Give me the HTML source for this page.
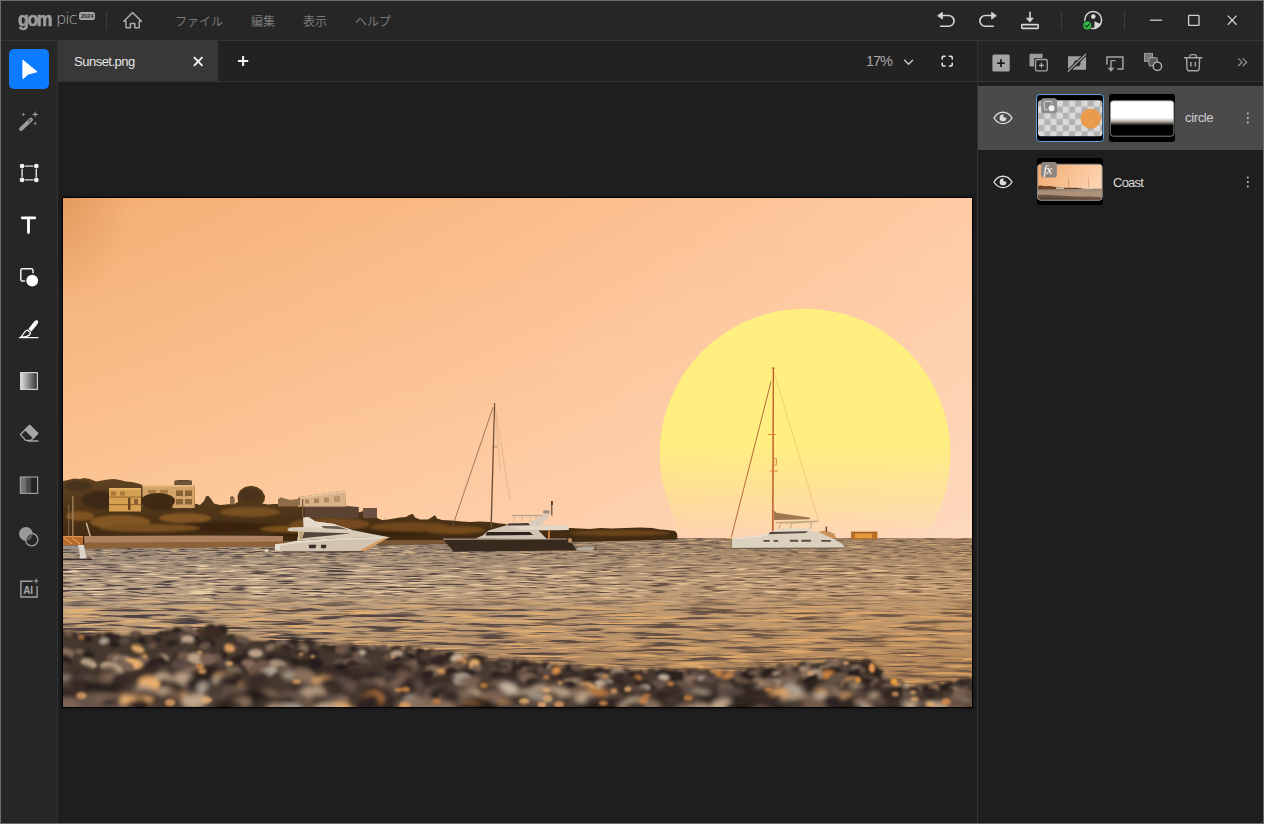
<!DOCTYPE html>
<html lang="ja">
<head>
<meta charset="utf-8">
<title>GOM Pic</title>
<style>
*{box-sizing:border-box;margin:0;padding:0}
html,body{width:1264px;height:824px;overflow:hidden;background:#1e1e1e}
body{font-family:"Liberation Sans","Noto Sans CJK JP",sans-serif;color:#ccc;position:relative}
.abs{position:absolute}
#win{position:absolute;left:0;top:0;width:1264px;height:824px;border:1px solid #6c6c6c;pointer-events:none;z-index:50}
#title{position:absolute;left:0;top:0;width:1264px;height:40px;background:#262626}
#titleline{position:absolute;left:0;top:40px;width:1264px;height:1px;background:#363636}
#tools{position:absolute;left:0;top:41px;width:57px;height:783px;background:#262626}
#toolsline{position:absolute;left:57px;top:41px;width:1px;height:783px;background:#333}
#tabbar{position:absolute;left:58px;top:41px;width:919px;height:40px;background:#222}
#tabline{position:absolute;left:58px;top:81px;width:1206px;height:1px;background:#343434}
#tab{position:absolute;left:58px;top:41px;width:160px;height:40px;background:#383838}
#tab span{position:absolute;left:16px;top:12.5px;font-size:13px;color:#e6e6e6;letter-spacing:-0.5px}
#canvas{position:absolute;left:58px;top:82px;width:919px;height:742px;background:#1e1e1e}
#panelline{position:absolute;left:977px;top:41px;width:1px;height:783px;background:#333}
#panel{position:absolute;left:978px;top:41px;width:286px;height:783px;background:#1e1e1e}
#ptools{position:absolute;left:978px;top:41px;width:286px;height:40px;background:#242424}
.menu{position:absolute;top:14px;font-size:12px;color:#7a7a7a;white-space:nowrap;line-height:16px}
.row{position:absolute;left:978px;width:285px;height:64px}
.lname{position:absolute;font-size:13px;color:#cfcfcf;line-height:16px}
svg{position:absolute;overflow:visible}
</style>
</head>
<body>
<div id="title"></div>
<div id="titleline"></div>
<div id="tools"></div>
<div id="toolsline"></div>
<div id="tabbar"></div>
<div id="tab"><span>Sunset.png</span></div>
<div id="canvas"></div>
<div id="panel"></div>
<div id="ptools"></div>
<div id="tabline"></div>
<div id="panelline"></div>

<!-- TITLEBAR -->
<div class="abs" id="logo" style="left:18px;top:7px;height:26px;white-space:nowrap;line-height:26px">
<span id="gom" style="font-weight:bold;font-size:20px;color:#9c9c9c;-webkit-text-stroke:0.7px #9c9c9c;letter-spacing:-1.6px;display:inline-block;position:relative;top:-1.5px;transform-origin:0 50%;transform:scaleX(.885)">gom</span><span id="pic" style="font-family:'DejaVu Sans Light','DejaVu Sans','Liberation Sans',sans-serif;font-weight:200;font-size:16.5px;color:#b4b4b4;letter-spacing:-1.1px;position:absolute;left:38px;top:-1px">pic</span>
</div>
<div class="abs" style="left:79px;top:12px;width:16px;height:8px;border-radius:2.5px;background:#a4a4a4;color:#2a2a2a;font-size:6px;font-weight:bold;line-height:8px;text-align:center;letter-spacing:-0.2px">2024</div>
<div class="abs" style="left:106px;top:11px;width:1px;height:19px;background:#3c3c3c"></div>
<svg style="left:120px;top:8px" width="26" height="24" viewBox="120 8 26 24" fill="none" stroke="#a8a8a8" stroke-width="1.5" stroke-linejoin="round" stroke-linecap="round">
<path d="M123.8,21.2 L132.6,12.6 141.4,21.2 H139.2 V27.8 H134.8 V23.4 H130.4 V27.8 H126 V21.2Z"/>
</svg>
<div class="menu" style="left:175px">ファイル</div>
<div class="menu" style="left:251px">編集</div>
<div class="menu" style="left:303px">表示</div>
<div class="menu" style="left:355px">ヘルプ</div>
<svg style="left:930px;top:5px" width="120" height="30" viewBox="930 5 120 30" fill="none" stroke="#d4d4d4" stroke-width="1.6" stroke-linecap="round" stroke-linejoin="round">
<path d="M941,15.5 H948.6 A5.4,5.4 0 0 1 948.6,26.3 H940.6"/><path d="M938,15.5 L942.3,12.4 V18.6Z" fill="#d4d4d4" stroke-width="1"/>
<path d="M993,15.5 H985.3 A5.4,5.4 0 0 0 985.3,26.3 H993.3"/><path d="M996,15.5 L991.7,12.4 V18.6Z" fill="#d4d4d4" stroke-width="1"/>
<path d="M1030,12.4 V19"/><path d="M1026.8,18.2 H1033.2 L1030,21.8Z" fill="#d4d4d4" stroke-width="1"/>
<rect x="1021.8" y="24.6" width="16.4" height="3.8" rx="0.6"/>
</svg>
<div class="abs" style="left:1061px;top:11px;width:1px;height:19px;background:#3c3c3c"></div>
<svg style="left:1078px;top:8px" width="28" height="26" viewBox="1078 8 28 26">
<circle cx="1093.2" cy="20" r="8.4" fill="none" stroke="#d8d8d8" stroke-width="1.5"/>
<circle cx="1093.3" cy="16.6" r="2.3" fill="#d8d8d8"/>
<path d="M1094.5,21.2 L1101,24.2 A8.4,8.4 0 0 1 1094.5,28.3Z" fill="#d8d8d8"/>
<circle cx="1087.2" cy="25.4" r="4.9" fill="#262626"/>
<circle cx="1087.2" cy="25.4" r="4" fill="#2fbf4a"/>
<path d="M1085.2,25.4 L1086.7,27 1089.3,24" fill="none" stroke="#143a1c" stroke-width="1.2" stroke-linecap="round" stroke-linejoin="round"/>
</svg>
<div class="abs" style="left:1124px;top:11px;width:1px;height:19px;background:#3c3c3c"></div>
<svg style="left:1145px;top:10px" width="100" height="22" viewBox="1145 10 100 22" fill="none" stroke="#cfcfcf" stroke-width="1.3">
<path d="M1150,20.2 H1162"/>
<rect x="1188.6" y="15.4" width="10.4" height="10" rx="0.5"/>
<path d="M1227.8,15.6 L1236.6,24.8 M1236.6,15.6 L1227.8,24.8"/>
</svg>

<!-- TOOLS -->
<div class="abs" style="left:9px;top:49px;width:40px;height:40px;border-radius:5px;background:#0b7bff"></div>
<svg style="left:9px;top:49px" width="40" height="40" viewBox="9 49 40 40"><path d="M22.9,60.2 L37,71.8 28.4,74 22.9,78.7Z" fill="#fff" stroke="#fff" stroke-width="1" stroke-linejoin="round"/></svg>
<svg style="left:14px;top:105px" width="30" height="30" viewBox="14 105 30 30">
<path d="M21,129 L31,119.6" stroke="#9a9a9a" stroke-width="4" stroke-linecap="round"/>
<path d="M28.6,121.6 L30.6,119.8" stroke="#262626" stroke-width="1" stroke-linecap="round"/>
<path d="M35.2,111 L36,113.6 38.6,114.4 36,115.2 35.2,117.8 34.4,115.2 31.8,114.4 34.4,113.6Z M23.4,112.2 L23.9,113.9 25.6,114.4 23.9,114.9 23.4,116.6 22.9,114.9 21.2,114.4 22.9,113.9Z M35.2,121.4 L35.7,123.1 37.4,123.6 35.7,124.1 35.2,125.8 34.7,124.1 33,123.6 34.7,123.1Z" fill="#9a9a9a"/>
</svg>
<svg style="left:14px;top:158px" width="30" height="30" viewBox="14 158 30 30">
<path d="M25,166.1 H33.4 M25,179.9 H33.4 M22.1,169 V177 M36.3,169 V177" stroke="#e4e4e4" stroke-width="1.4" fill="none"/>
<circle cx="22.1" cy="166.1" r="2.4" fill="#f0f0f0"/><circle cx="36.3" cy="166.1" r="2.4" fill="#f0f0f0"/><circle cx="22.1" cy="179.9" r="2.4" fill="#f0f0f0"/><circle cx="36.3" cy="179.9" r="2.4" fill="#f0f0f0"/>
</svg>
<svg style="left:14px;top:210px" width="30" height="30" viewBox="14 210 30 30"><path d="M22.2,217.8 H34.8 M28.5,217.8 V232.6" stroke="#fff" stroke-width="2.8" stroke-linecap="round" fill="none"/></svg>
<svg style="left:14px;top:262px" width="30" height="30" viewBox="14 262 30 30">
<path d="M24.5,281 H22.4 A1.6,1.6 0 0 1 20.8,279.4 V270.4 A1.6,1.6 0 0 1 22.4,268.8 H31.4 A1.6,1.6 0 0 1 33,270.4 V272.8" stroke="#f0f0f0" stroke-width="1.5" fill="none" stroke-linecap="round"/>
<circle cx="32.2" cy="280.6" r="5.9" fill="#fff"/>
</svg>
<svg style="left:14px;top:314px" width="30" height="30" viewBox="14 314 30 30">
<path d="M19.4,337.6 H38" stroke="#f4f4f4" stroke-width="1.3" stroke-linecap="round"/>
<path d="M37.6,320.6 C38.8,321.6 38.2,323.4 36.6,325.2 L31.4,331.4 28.4,329 33.4,322.6 C34.8,320.8 36.4,319.8 37.6,320.6Z" fill="#fff"/>
<path d="M27.4,330 L30.4,332.4 C30.4,335.6 26,337.4 20.6,337.2 C23.2,335.6 23.4,331.4 27.4,330Z" fill="none" stroke="#fff" stroke-width="1.3" stroke-linejoin="round"/>
</svg>
<svg style="left:14px;top:366px" width="30" height="30" viewBox="14 366 30 30"><defs><linearGradient id="tg1" x1="0" x2="1"><stop offset="0" stop-color="#e2e2e2"/><stop offset="1" stop-color="#2e2e2e"/></linearGradient></defs>
<rect x="20.6" y="372.6" width="16.8" height="16.8" fill="url(#tg1)" stroke="#d0d0d0" stroke-width="1.2"/></svg>
<svg style="left:14px;top:418px" width="30" height="30" viewBox="14 418 30 30">
<path d="M20.4,434.4 L29.6,425.6 37.6,433.2 31,440.4 H25.6Z" fill="none" stroke="#a6a6a6" stroke-width="1.4" stroke-linejoin="round"/>
<path d="M25.2,429.8 L29.6,425.6 37.6,433.2 33.4,437.8Z" fill="#a6a6a6" stroke="#a6a6a6" stroke-width="1.4" stroke-linejoin="round"/>
<path d="M28,441 H38" stroke="#a6a6a6" stroke-width="1.3" stroke-linecap="round"/>
</svg>
<svg style="left:14px;top:470px" width="30" height="30" viewBox="14 470 30 30"><defs><linearGradient id="tg2" x1="0" x2="1"><stop offset="0" stop-color="#7c7c7c"/><stop offset=".34" stop-color="#6a6a6a"/><stop offset=".36" stop-color="#4c4c4c"/><stop offset=".62" stop-color="#444"/><stop offset=".64" stop-color="#262626"/><stop offset="1" stop-color="#222"/></linearGradient></defs>
<rect x="20.4" y="477" width="17.2" height="16.4" fill="url(#tg2)" stroke="#9c9c9c" stroke-width="1.2"/></svg>
<svg style="left:14px;top:522px" width="30" height="30" viewBox="14 522 30 30">
<defs><clipPath id="bc2"><circle cx="31.7" cy="539.6" r="6.2"/></clipPath></defs>
<circle cx="25.9" cy="533.8" r="6.9" fill="#9a9a9a"/>
<circle cx="31.7" cy="539.6" r="6.2" fill="#262626"/>
<circle cx="25.9" cy="533.8" r="6.9" fill="#5c5c5c" clip-path="url(#bc2)"/>
<circle cx="31.7" cy="539.6" r="6.2" fill="none" stroke="#a0a0a0" stroke-width="1.3"/>
</svg>
<svg style="left:14px;top:574px" width="30" height="30" viewBox="14 574 30 30">
<path d="M32.6,581.2 H20.9 V597 H37.1 V586" fill="none" stroke="#a0a0a0" stroke-width="1.4"/>
<path d="M36.1,577.6 L36.8,580.2 39.4,580.9 36.8,581.6 36.1,584.2 35.4,581.6 32.8,580.9 35.4,580.2Z" fill="#a0a0a0"/>
<text x="23.2" y="594" font-family="Liberation Sans, sans-serif" font-weight="bold" font-size="10" fill="#a8a8a8" letter-spacing="-0.2">AI</text>
</svg>

<!-- TAB BAR -->
<svg style="left:190px;top:53px" width="60" height="16" viewBox="190 53 60 16" fill="none" stroke="#f2f2f2" stroke-width="1.7" stroke-linecap="round">
<path d="M193.9,57.2 L202.5,65.8 M202.5,57.2 L193.9,65.8" stroke-linecap="butt" stroke-width="1.9"/>
<path d="M238,61 H248.2 M243.1,55.9 V66.1" stroke-width="2" stroke-linecap="butt"/>
</svg>
<div class="abs" style="left:866px;top:52px;font-size:14.5px;color:#a8a8a8;line-height:18px;letter-spacing:-1.1px">17%</div>
<svg style="left:900px;top:52px" width="60" height="18" viewBox="900 52 60 18" fill="none" stroke-linecap="round" stroke-linejoin="round">
<path d="M904.6,60.2 L908.6,64.2 912.6,60.2" stroke="#c8c8c8" stroke-width="1.4"/>
<path d="M942.2,59 V57.4 A1.2,1.2 0 0 1 943.4,56.2 H945 M949.4,56.2 H951 A1.2,1.2 0 0 1 952.2,57.4 V59 M952.2,63.2 V64.8 A1.2,1.2 0 0 1 951,66 H949.4 M945,66 H943.4 A1.2,1.2 0 0 1 942.2,64.8 V63.2" stroke="#ececec" stroke-width="1.5"/>
</svg>

<!-- PANEL TOOLBAR -->
<svg style="left:985px;top:48px" width="270" height="30" viewBox="985 48 270 30" fill="none">
<rect x="992.4" y="54.5" width="17.3" height="17" rx="1.6" fill="#a4a4a4"/>
<path d="M997.2,63.1 H1004.8 M1001,59.3 V66.9" stroke="#1c1c1c" stroke-width="1.8"/>
<rect x="1029.5" y="53.7" width="13.1" height="12.7" rx="1" fill="#9c9c9c"/>
<rect x="1034" y="58" width="14.6" height="14.2" rx="1.6" fill="#242424"/>
<rect x="1035.5" y="59.5" width="11.8" height="11.4" rx="1.4" fill="#242424" stroke="#a4a4a4" stroke-width="1.3"/>
<path d="M1038.9,65.3 H1043.9 M1041.4,62.8 V67.8" stroke="#b0b0b0" stroke-width="1.2"/>
<rect x="1068" y="56.3" width="18" height="13.4" rx=".8" fill="#a0a0a0"/>
<ellipse cx="1077.2" cy="63.3" rx="3.3" ry="3.1" fill="#2a2a2a"/>
<path d="M1067.6,72 L1086.2,53.8" stroke="#242424" stroke-width="3.6"/>
<path d="M1067.8,71.6 L1086,54" stroke="#a8a8a8" stroke-width="1.2"/>
<path d="M1107,64.6 V57 H1122.9 V69 H1117.3" stroke="#a4a4a4" stroke-width="1.5"/>
<path d="M1115.6,60.6 H1111 V68.6" stroke="#a4a4a4" stroke-width="1.4"/>
<path d="M1107.6,67.8 H1114.4 L1111,71.8Z" fill="#a4a4a4"/>
<rect x="1144.5" y="53.4" width="8" height="8" fill="#767676" stroke="#9a9a9a" stroke-width="1"/>
<rect x="1148.9" y="57.6" width="8.4" height="8.4" rx="2" fill="#585858" stroke="#9a9a9a" stroke-width="1.1"/>
<circle cx="1157.4" cy="66.3" r="4.2" fill="#242424" stroke="#b0b0b0" stroke-width="1.4"/>
<path d="M1184.4,57.8 H1201.8 M1189.8,57.6 V56.4 A1.8,1.8 0 0 1 1191.6,54.6 H1194.6 A1.8,1.8 0 0 1 1196.4,56.4 V57.6 M1186.6,58 L1187,68.6 A2.2,2.2 0 0 0 1189.2,70.8 H1197 A2.2,2.2 0 0 0 1199.2,68.6 L1199.6,58" stroke="#a4a4a4" stroke-width="1.4" stroke-linecap="round"/>
<path d="M1190.9,62 V66.4 M1195.3,62 V66.4" stroke="#a4a4a4" stroke-width="1.5"/>
<path d="M1238.3,58.4 L1242.1,62.2 1238.3,66 M1242.8,58.4 L1246.6,62.2 1242.8,66" stroke="#9a9a9a" stroke-width="1.1"/>
</svg>

<!-- LAYER ROWS -->
<div class="row" style="top:86px;background:#4a4a4a"></div>
<svg style="left:990px;top:108px" width="26" height="20" viewBox="990 108 26 20" fill="none">
<path d="M994,118 C996.6,113.6 1000,112.2 1003,112.2 C1006,112.2 1009.4,113.6 1012,118 C1009.4,122.2 1006,123.6 1003,123.6 C1000,123.6 996.6,122.2 994,118Z" stroke="#dcdcdc" stroke-width="1.4"/>
<circle cx="1003" cy="117.9" r="3.4" fill="#dcdcdc"/><circle cx="1005" cy="116" r="1.7" fill="#4a4a4a"/>
</svg>
<svg style="left:990px;top:172px" width="26" height="20" viewBox="990 172 26 20" fill="none">
<path d="M994,182 C996.6,177.6 1000,176.2 1003,176.2 C1006,176.2 1009.4,177.6 1012,182 C1009.4,186.2 1006,187.6 1003,187.6 C1000,187.6 996.6,186.2 994,182Z" stroke="#dcdcdc" stroke-width="1.4"/>
<circle cx="1003" cy="181.9" r="3.4" fill="#dcdcdc"/><circle cx="1005" cy="180" r="1.7" fill="#1e1e1e"/>
</svg>
<!-- thumb 1 -->
<div class="abs" style="left:1036px;top:94px;width:68px;height:48px;border-radius:4px;background:#000;border:1px solid #5b9fe2"></div>
<svg style="left:1038px;top:100px" width="65" height="37" viewBox="1038 100 65 37">
<defs><pattern id="chk" x="1038" y="100.3" width="12.4" height="12.4" patternUnits="userSpaceOnUse"><rect width="12.4" height="12.4" fill="#dadada"/><rect width="6.2" height="6.2" fill="#b2b2b2"/><rect x="6.2" y="6.2" width="6.2" height="6.2" fill="#b2b2b2"/></pattern></defs>
<rect x="1038" y="100.3" width="64.4" height="36" rx="3" fill="url(#chk)"/>
<circle cx="1090.7" cy="118.6" r="10.2" fill="#ee9640" fill-opacity=".9"/>
<rect x="1041.2" y="98.3" width="15.8" height="15" rx="2.4" fill="#8c8c8c"/>
<path d="M1047.5,109.6 H1045.2 A.9,.9 0 0 1 1044.3,108.7 V102.3 A.9,.9 0 0 1 1045.2,101.4 H1051 A.9,.9 0 0 1 1051.9,102.3 V103.6" stroke="#d8d8d8" stroke-width="1" fill="none"/>
<circle cx="1051.6" cy="108.2" r="3" fill="#f4f4f4"/>
</svg>
<!-- thumb mask -->
<div class="abs" style="left:1109px;top:94px;width:66px;height:48px;border-radius:3px;background:#000"></div>
<svg style="left:1109px;top:100px" width="66" height="37" viewBox="1109 100 66 37"><defs><linearGradient id="mk" x1="0" x2="0" y1="0" y2="1"><stop offset="0" stop-color="#fff"/><stop offset=".48" stop-color="#fff"/><stop offset=".58" stop-color="#b8b0a8"/><stop offset=".7" stop-color="#000"/><stop offset="1" stop-color="#000"/></linearGradient></defs>
<rect x="1110.3" y="100.8" width="63.6" height="35.4" rx="3" fill="url(#mk)" stroke="#8a8a8a" stroke-width=".9"/></svg>
<div class="lname" style="left:1185px;top:110px;letter-spacing:-0.35px">circle</div>
<svg style="left:1244px;top:108px" width="8" height="84" viewBox="1244 108 8 84" fill="#c4c4c4"><circle cx="1247.8" cy="113.4" r="1"/><circle cx="1247.8" cy="118" r="1"/><circle cx="1247.8" cy="122.6" r="1"/><circle cx="1247.8" cy="177.4" r="1"/><circle cx="1247.8" cy="182" r="1"/><circle cx="1247.8" cy="186.6" r="1"/></svg>
<!-- thumb 2 -->
<div class="abs" style="left:1036.8px;top:158px;width:66.6px;height:47px;border-radius:3px;background:#000"></div>
<svg style="left:1037px;top:160px" width="67" height="42" viewBox="1037 160 67 42">
<defs><linearGradient id="t2s" x1="0" x2="1" y1="0" y2=".4"><stop offset="0" stop-color="#efa86e"/><stop offset=".5" stop-color="#f8bf90"/><stop offset="1" stop-color="#fdd3b2"/></linearGradient>
<clipPath id="t2c"><rect x="1037.6" y="164.2" width="64.6" height="36" rx="3"/></clipPath></defs>
<g clip-path="url(#t2c)">
<rect x="1037" y="164" width="66" height="37" fill="url(#t2s)"/>
<rect x="1037" y="188.6" width="66" height="13" fill="#a08a78"/>
<rect x="1037" y="191.5" width="66" height="10" fill="#ad927a"/>
<path d="M1037,186 L1041,185.6 1045,186.2 1050,186 1054,186.8 1060,187.4 1066,187.8 1074,188 1082,188.2 1082,189 1037,189.4Z" fill="#6a4426"/>
<rect x="1056" y="187.6" width="8" height="1.3" fill="#d8ccb8"/><rect x="1069" y="187.8" width="9" height="1.2" fill="#5a4434"/><rect x="1085.5" y="187.6" width="8" height="1.3" fill="#dccfbc"/>
<rect x="1068.2" y="179" width=".6" height="9" fill="#b08868"/><rect x="1088.2" y="177.4" width=".6" height="10" fill="#d89868"/>
<path d="M1037,194.8 C1045,194.4 1052,194.8 1060,195.6 C1070,196.4 1080,197 1090,196.6 C1096,196.4 1100,197.6 1103,197.4 V202 H1037Z" fill="#6e5444"/>
<path d="M1037,197.2 C1050,196.8 1070,198.4 1103,198.8 V202 H1037Z" fill="#5c4436"/>
</g>
<rect x="1037.6" y="164.2" width="64.6" height="36" rx="3" fill="none" stroke="#8c8c8c" stroke-width=".9"/>
<rect x="1041.1" y="162" width="15.8" height="15.5" rx="2.4" fill="#8e857c"/>
<text x="1043.4" y="173.6" font-family="Liberation Serif, serif" font-style="italic" font-size="13" fill="#fff" letter-spacing="-0.6">fx</text>
</svg>
<div class="lname" style="left:1113px;top:175px;letter-spacing:-0.75px;color:#dadada">Coast</div>

<!-- PHOTO -->
<div id="photo" class="abs" style="left:62px;top:197px;width:911px;height:511px;background:#000;box-shadow:0 0 3px rgba(0,0,0,.55)">
<svg id="photosvg" style="left:1px;top:1px" width="909" height="509" viewBox="63 198 909 509">
<defs>
<linearGradient id="skyT" x1="0" x2="1" y1="0" y2="0"><stop offset="0" stop-color="#F3AE74"/><stop offset="0.5" stop-color="#FBBC8A"/><stop offset="1" stop-color="#FECBA4"/></linearGradient>
<linearGradient id="skyB" x1="0" x2="1" y1="0" y2="0"><stop offset="0" stop-color="#FDC898"/><stop offset="0.5" stop-color="#FECFAA"/><stop offset="1" stop-color="#FED9BE"/></linearGradient>
<linearGradient id="vfade" x1="0" x2="0" y1="198" y2="545" gradientUnits="userSpaceOnUse"><stop offset="0" stop-color="#000"/><stop offset="1" stop-color="#fff"/></linearGradient>
<mask id="mskB" maskUnits="userSpaceOnUse" x="63" y="198" width="909" height="509"><rect x="63" y="198" width="909" height="509" fill="url(#vfade)"/></mask>
<radialGradient id="vig" cx="0" cy="0" r="1" gradientUnits="userSpaceOnUse" gradientTransform="translate(63 198) scale(66 105)"><stop offset="0" stop-color="#C8803F" stop-opacity=".4"/><stop offset="1" stop-color="#C8803F" stop-opacity="0"/></radialGradient>
<linearGradient id="sunfade" x1="0" x2="0" y1="440" y2="538" gradientUnits="userSpaceOnUse"><stop offset="0" stop-color="#fff"/><stop offset="0.5" stop-color="#888"/><stop offset="1" stop-color="#000"/></linearGradient>
<mask id="sunmask" maskUnits="userSpaceOnUse" x="63" y="198" width="909" height="509"><rect x="63" y="198" width="909" height="509" fill="url(#sunfade)"/></mask>
<linearGradient id="landG" x1="0" x2="0" y1="478" y2="540" gradientUnits="userSpaceOnUse"><stop offset="0" stop-color="#5E4222"/><stop offset="0.5" stop-color="#503619"/><stop offset="1" stop-color="#402A12"/></linearGradient>
<linearGradient id="waterG" x1="0" x2="0" y1="539" y2="690" gradientUnits="userSpaceOnUse"><stop offset="0" stop-color="#8E7E70"/><stop offset="0.14" stop-color="#A4907C"/><stop offset="0.34" stop-color="#B89E82"/><stop offset="0.55" stop-color="#BE9E7A"/><stop offset="0.8" stop-color="#AE8A66"/><stop offset="1" stop-color="#A4805C"/></linearGradient>
<filter id="w1d" x="0" y="0" width="100%" height="100%" color-interpolation-filters="sRGB">
<feTurbulence type="fractalNoise" baseFrequency="0.065 0.95" numOctaves="2" seed="3"/>
<feColorMatrix type="matrix" values="0 0 0 0 0.32  0 0 0 0 0.28  0 0 0 0 0.28  4.5 0 0 0 -2.25"/>
</filter>
<filter id="w1l" x="0" y="0" width="100%" height="100%" color-interpolation-filters="sRGB">
<feTurbulence type="fractalNoise" baseFrequency="0.06 0.9" numOctaves="2" seed="11"/>
<feColorMatrix type="matrix" values="0 0 0 0 0.84  0 0 0 0 0.72  0 0 0 0 0.56  0 4.5 0 0 -2.45"/>
</filter>
<filter id="w2d" x="0" y="0" width="100%" height="100%" color-interpolation-filters="sRGB">
<feTurbulence type="fractalNoise" baseFrequency="0.04 0.62" numOctaves="2" seed="5"/>
<feColorMatrix type="matrix" values="0 0 0 0 0.30  0 0 0 0 0.25  0 0 0 0 0.26  5 0 0 0 -2.55"/>
</filter>
<filter id="w2l" x="0" y="0" width="100%" height="100%" color-interpolation-filters="sRGB">
<feTurbulence type="fractalNoise" baseFrequency="0.037 0.6" numOctaves="2" seed="21"/>
<feColorMatrix type="matrix" values="0 0 0 0 0.92  0 0 0 0 0.81  0 0 0 0 0.66  0 5 0 0 -2.6"/>
</filter>
<filter id="w3d" x="0" y="0" width="100%" height="100%" color-interpolation-filters="sRGB">
<feTurbulence type="fractalNoise" baseFrequency="0.019 0.34" numOctaves="3" seed="8"/>
<feColorMatrix type="matrix" values="0 0 0 0 0.30  0 0 0 0 0.25  0 0 0 0 0.26  5.5 0 0 0 -2.62"/>
</filter>
<filter id="w3l" x="0" y="0" width="100%" height="100%" color-interpolation-filters="sRGB">
<feTurbulence type="fractalNoise" baseFrequency="0.018 0.36" numOctaves="3" seed="31"/>
<feColorMatrix type="matrix" values="0 0 0 0 0.90  0 0 0 0 0.70  0 0 0 0 0.46  0 5 0 0 -2.65"/>
</filter>
<linearGradient id="gA" x1="0" x2="0" y1="556" y2="568" gradientUnits="userSpaceOnUse"><stop offset="0" stop-color="#fff"/><stop offset="1" stop-color="#000"/></linearGradient>
<linearGradient id="gB" x1="0" x2="0" y1="556" y2="610" gradientUnits="userSpaceOnUse"><stop offset="0" stop-color="#000"/><stop offset="0.22" stop-color="#fff"/><stop offset="0.7" stop-color="#fff"/><stop offset="1" stop-color="#000"/></linearGradient>
<linearGradient id="gC" x1="0" x2="0" y1="594" y2="610" gradientUnits="userSpaceOnUse"><stop offset="0" stop-color="#000"/><stop offset="1" stop-color="#fff"/></linearGradient>
<mask id="mA" maskUnits="userSpaceOnUse" x="63" y="530" width="909" height="180"><rect x="63" y="530" width="909" height="180" fill="url(#gA)"/></mask>
<mask id="mB" maskUnits="userSpaceOnUse" x="63" y="530" width="909" height="180"><rect x="63" y="530" width="909" height="180" fill="url(#gB)"/></mask>
<mask id="mC" maskUnits="userSpaceOnUse" x="63" y="530" width="909" height="180"><rect x="63" y="530" width="909" height="180" fill="url(#gC)"/></mask>
<linearGradient id="warmG" x1="63" x2="972" y1="0" y2="0" gradientUnits="userSpaceOnUse"><stop offset="0" stop-color="#C88A48" stop-opacity="0"/><stop offset="0.35" stop-color="#C88A48" stop-opacity="0.06"/><stop offset="1" stop-color="#C88A48" stop-opacity="0.34"/></linearGradient>
<filter id="blur1"><feGaussianBlur stdDeviation="1.1"/></filter>
<filter id="blur15"><feGaussianBlur stdDeviation="1.5"/></filter>
<filter id="blur3"><feGaussianBlur stdDeviation="2.8"/></filter>
<filter id="blur2"><feGaussianBlur stdDeviation="2"/></filter>
<filter id="blur05"><feGaussianBlur stdDeviation="0.5"/></filter>
<clipPath id="clipAll"><rect x="63" y="198" width="909" height="509"/></clipPath>
</defs>
<g clip-path="url(#clipAll)">
<rect x="63" y="198" width="909" height="350" fill="url(#skyT)"/>
<rect x="63" y="198" width="909" height="350" fill="url(#skyB)" mask="url(#mskB)"/>
<rect x="63" y="198" width="80" height="120" fill="url(#vig)"/>
<circle cx="805.1" cy="454.1" r="145.4" fill="#FFEF80" mask="url(#sunmask)"/>
<rect x="63" y="538" width="909" height="170" fill="url(#waterG)"/>
<g mask="url(#mA)"><rect x="63" y="538" width="909" height="32" filter="url(#w1d)"/><rect x="63" y="538" width="909" height="32" filter="url(#w1l)"/></g>
<g mask="url(#mB)"><rect x="63" y="554" width="909" height="58" filter="url(#w2d)"/><rect x="63" y="554" width="909" height="58" filter="url(#w2l)"/></g>
<g mask="url(#mC)"><rect x="63" y="592" width="909" height="100" filter="url(#w3d)"/><rect x="63" y="592" width="909" height="100" filter="url(#w3l)"/></g>
<rect x="63" y="538" width="909" height="170" fill="url(#warmG)"/>
<g id="land">
<!-- main land silhouette -->
<path fill="url(#landG)" d="M63,481 L68,480 74,478.5 80,479 84,478 90,479 96,481.5 102,480.5 108,479.5 114,479 120,480 126,481.5 132,482 138,483.5 142.5,485 174.5,485 174.5,481.5 178,480 188,480 192,481.5 192,485 194.7,485 194.7,503.5 200,505 204,501 206,496.5 208.5,496 211,499 214,503.5 220,505 226,504.5 230,504 230,497.5 232,496 234,497.5 234.5,504 238,502 237.5,496 240,490.5 245,487 251,485.8 257,487 262,490.5 265,496 264.5,501 262,503.5 268,504.5 274,504 278,504 278,499.5 281,497.5 285,499 290,500 297,499.5 300,497 345,490.6 345.5,506 358.5,507 358.5,512.5 363,511 363,508 377,508 377,518 382,520 388,519.5 394,518.5 400,517.5 406,517 410,514.5 413,514 415,517.5 420,519.5 428,519.5 433,516.5 435,515 437,518.5 442,520 452,520.5 462,521.5 470,522 480,521.5 490,522 500,523.5 520,525 545,527 570,528 590,529 600,528 612,528.5 625,528 640,527.5 652,528 660,529.5 668,530 675,531 677,533.5 677.5,539.5 600,541.5 500,543 400,544.5 285,546.5 85,548.5 63,548.5Z"/>
<!-- lit foliage patches -->
<g filter="url(#blur1)" opacity=".9">
<ellipse cx="78" cy="486" rx="14" ry="5" fill="#46301A"/>
<ellipse cx="100" cy="500" rx="18" ry="9" fill="#3A2612"/>
<ellipse cx="160" cy="503" rx="16" ry="7" fill="#38240F"/>
<ellipse cx="120" cy="522" rx="30" ry="7" fill="#8A5C28"/>
<ellipse cx="80" cy="516" rx="14" ry="5" fill="#845624"/>
<ellipse cx="185" cy="518" rx="26" ry="5" fill="#8A5A28"/>
<ellipse cx="250" cy="512" rx="30" ry="5" fill="#7E5222"/>
<ellipse cx="215" cy="527" rx="60" ry="5" fill="#38230E"/>
<ellipse cx="330" cy="524" rx="40" ry="6" fill="#7A4E20"/>
<ellipse cx="410" cy="527" rx="40" ry="5" fill="#74481C"/>
<ellipse cx="350" cy="534" rx="80" ry="3.5" fill="#38230E"/>
<ellipse cx="620" cy="533" rx="50" ry="3" fill="#70461A"/>
<ellipse cx="150" cy="528" rx="50" ry="4" fill="#7E5222"/><ellipse cx="300" cy="529" rx="40" ry="3.5" fill="#80541F"/><ellipse cx="455" cy="530" rx="30" ry="4" fill="#7A4E1E"/><ellipse cx="250" cy="495" rx="11" ry="7" fill="#4A321A"/>
</g>
<!-- buildings -->
<rect x="109" y="488" width="32" height="23.5" fill="#D6A052"/>
<rect x="109" y="488" width="32" height="2" fill="#E2B264"/>
<rect x="109" y="496.5" width="32" height="1.2" fill="#9A6A30"/>
<rect x="109" y="504" width="32" height="1.2" fill="#9A6A30"/>
<rect x="111" y="491.5" width="5" height="4" fill="#A87838"/><rect x="120" y="491.5" width="5" height="4" fill="#A87838"/>
<rect x="128" y="498" width="2.5" height="12" fill="#6A4420"/><rect x="134" y="499" width="4" height="5" fill="#8A6030"/>
<rect x="142.5" y="485" width="52.2" height="23" fill="#D3A266"/>
<rect x="142.5" y="485" width="52.2" height="2" fill="#E4B87C"/>
<rect x="174.5" y="480.5" width="17.5" height="4.5" fill="#6E5236"/>
<rect x="148" y="490" width="8" height="3.5" fill="#A87A48"/><rect x="160" y="490" width="8" height="3.5" fill="#A87A48"/>
<rect x="176" y="490.5" width="7" height="5.5" fill="#8A6238"/><rect x="185" y="490.5" width="7" height="5.5" fill="#8A6238"/>
<rect x="176" y="499" width="7" height="5.5" fill="#8A6238"/><rect x="185" y="499" width="7" height="5.5" fill="#8A6238"/>
<rect x="142.5" y="497" width="30" height="11" fill="#48301A"/>
<ellipse cx="158" cy="501" rx="17" ry="8" fill="#402A14"/>
<!-- building 3 -->
<path d="M278,499.5 L281,497.5 285,499 290,500 297,499.5 300,497 300,506.5 278,506.5Z" fill="#8E6E48"/>
<path d="M300,497 L345,490.6 345.5,506 300,506Z" fill="#D8B288"/>
<path d="M300,497 L345,490.6 345,492.2 300,498.6Z" fill="#EAC9A0"/>
<rect x="305" y="499.5" width="4" height="4" fill="#A8845C"/><rect x="314" y="498.5" width="5" height="4.5" fill="#A8845C"/><rect x="324" y="497.5" width="5" height="5" fill="#B08C64"/><rect x="334" y="496" width="6" height="6" fill="#B9956C"/>
<rect x="298" y="505.5" width="48" height="1.3" fill="#C9A77E"/>
<rect x="305" y="507" width="53.5" height="11" fill="#5C4230"/>
<rect x="363" y="508" width="14" height="10" fill="#6A5040"/>
<rect x="302" y="499" width="1.2" height="18" fill="#7A5A38"/>
<!-- small structures -->
<rect x="230" y="497.5" width="4.5" height="7" fill="#8A6E4C"/>
<rect x="206.5" y="496" width="1.2" height="9" fill="#5A3A1A"/>
<!-- sand -->
<path d="M84,536 L200,535.5 283,536 283,546.5 85,548.5Z" fill="#AC8260"/>
<path d="M84,542.5 L283,541.5 283,546.5 85,548.5Z" fill="#8E6238"/>
<path d="M283,541 L400,540 480,540 480,543.2 400,544.5 285,546.5Z" fill="#7A5634"/>
<!-- right small island -->
<path d="M851,539.3 L851,533.2 852.5,532 876,532 877.4,533 877.4,539.3Z" fill="#B96F26"/>
<rect x="855" y="533.5" width="17" height="4.6" fill="#E39A3E"/>
<rect x="851" y="531.7" width="26.4" height="1" fill="#9A5A20"/>
</g>

<g id="boats">
<!-- left edge boat -->
<rect x="72.2" y="496" width="1.3" height="41" fill="#A8865C"/>
<rect x="68.3" y="505" width="0.9" height="31" fill="#8E6E48"/>
<rect x="66.5" y="517" width="9" height="0.8" fill="#8E6E48"/>
<path d="M85.6,522.8 L87,522.6 91,536.5 89.6,536.8Z" fill="#D4B896"/>
<rect x="63" y="536" width="20" height="9.5" fill="#B86A2C"/>
<rect x="63" y="536" width="20" height="1.2" fill="#E09850"/>
<path d="M64,538 L72,544 M72,538 L80,544" stroke="#E8B070" stroke-width="1" fill="none"/>
<rect x="63" y="545.5" width="16" height="3.5" fill="#9A8E88"/>
<path d="M78,545 L84,545 85.5,553 87,558.5 80,559.5 79.5,552Z" fill="#DCD4CA"/>
<rect x="63" y="558.6" width="29" height="1.4" fill="#3A2C28"/>
<!-- white yacht 1 -->
<path d="M275,544.3 L283,543.6 296.5,541 337.5,538.2 382,537 389.6,537.1 364,551.2 282,551.6 275,550.4Z" fill="#D2C4B0"/>
<path d="M275,544.3 L283,543.6 296.5,541 337.5,538.2 382,537 389.6,537.1 387,538.5 337.5,540 296.5,543 283,545.2 275,545.6Z" fill="#E8DDCC"/>
<path d="M364,551.2 L389.6,537.1 384,538 358,551.2Z" fill="#D89A5C"/>
<rect x="275" y="544.3" width="5" height="6" fill="#E6DED2"/>
<path d="M282,551.6 L364,551.2 363,552.2 282,552.6Z" fill="#4A3A30"/>
<path d="M287.1,529.3 L290,527.5 303.5,527 303.2,517.6 308.7,517.2 315.4,521.6 333,523.8 352,530 370.7,533.8 388.5,537 337.5,538.2 302,540.2 297,541 299,531.5 289,531.2Z" fill="#D8CBB8"/>
<path d="M303.2,517.6 L308.7,517.2 315.4,521.6 333,523.8 352,530 340,529.2 313,527.4 304,527.2Z" fill="#E6DBCA"/>
<path d="M321,526 L338,526.2 348,529.4 324,528.2Z" fill="#6A5A4A"/>
<path d="M304.3,532.1 L350.8,533.2 330.9,535.4 314.3,537.1 302,538.4Z" fill="#54453A"/>
<path d="M299,531.5 L304.3,532.1 302,538.4 298,540.5Z" fill="#BCA078"/>
<rect x="298" y="531.5" width="1.3" height="9" fill="#E0C8A0"/>
<path d="M308.7,544.8 L316.5,544.8 315.3,548.2 309.2,548.2Z" fill="#3A2E2A"/>
<path d="M320.9,544.8 L326.4,544.8 325.8,548.2 321.2,548.2Z" fill="#3A2E2A"/>
<ellipse cx="266.5" cy="550.5" rx="2.2" ry="1.6" fill="#E0D0B8"/>
<!-- sailboat mast behind dark yacht -->
<path d="M494,403 L495.2,403 491.8,528 490.4,528Z" fill="#6E4E34"/>
<path d="M493.2,407 L450.6,532" stroke="#6E5238" stroke-width="0.8" fill="none" opacity=".85"/>
<path d="M495,405 L510,500 M495,405 L500,470" stroke="#C89A70" stroke-width="0.6" fill="none" opacity=".7"/>
<rect x="492" y="446.5" width="5" height="0.8" fill="#8A6A4A"/>
<!-- dark yacht 2 -->
<path d="M442.8,539.1 L566.7,539.1 572.4,543.4 576.7,550.5 453.5,551.4Z" fill="#38291F"/>
<path d="M442.8,538.6 L566.7,538.6 567.5,539.6 443.6,539.8Z" fill="#A8998A"/>
<path d="M482.7,535.6 L488.4,530.6 505.5,525.6 568.1,525.6 568.8,529.9 538.2,530.2 546.8,539.1 475.6,538.6Z" fill="#D2C4B4"/>
<path d="M505.5,525.6 L568.1,525.6 568.8,529.9 538.2,530.2 520,529.5Z" fill="#E2D6C6"/>
<path d="M487,532 L529.7,532 533.2,534.9 485.5,535.6Z" fill="#2C221E"/>
<path d="M507.6,523.5 L528.3,522.8 543.9,514.9 551,514.2 541.1,525.6 505.5,525.6Z" fill="#D9CCBC"/>
<path d="M508.3,523.6 L528.3,523 530,525.2 507,525.4Z" fill="#4A3C34"/>
<rect x="511.9" y="514.9" width="30.6" height="1.3" fill="#B8A48C"/>
<path d="M514,516 L514,522.5 M522,516 L522,522.5 M530,516 L530,521.5 M536,516 L536,519" stroke="#C6AE90" stroke-width="0.8" fill="none"/>
<rect x="543.2" y="510.2" width="6.4" height="3.4" rx="1.2" fill="#9A8C80"/>
<rect x="551.2" y="501.4" width="1.2" height="14" fill="#5A4A3E"/>
<rect x="551" y="501" width="1.8" height="4" fill="#4A3A30"/>
<rect x="548.2" y="530.6" width="1.6" height="8.5" fill="#E48C3C"/>
<path d="M577.4,547.2 L593.8,547 593.2,550.5 578,550.6Z" fill="#B4AAA0"/>
<rect x="595.3" y="545.3" width="0.9" height="5" fill="#4A3A30"/>
<ellipse cx="570" cy="540.5" rx="2" ry="2.4" fill="#C09468"/>
<!-- catamaran 3 -->
<path d="M772.7,368 L774,368 773.6,531.5 772,531.5Z" fill="#C65A2A"/>
<rect x="771.4" y="367.6" width="3.6" height="0.9" fill="#C65A2A"/>
<path d="M771,381.7 L731.4,537" stroke="#B8683A" stroke-width="1" fill="none"/>
<path d="M774,372 L818.3,520" stroke="#E8B060" stroke-width="0.7" fill="none" opacity=".7"/>
<path d="M768,434.5 L776,434.5 M770,471 L778,471" stroke="#D87040" stroke-width="0.8" fill="none"/>
<rect x="774" y="458.5" width="2.4" height="6.5" fill="none" stroke="#D87848" stroke-width="0.7"/>
<path d="M773.4,509.9 L776.3,512.8 810.4,517.8 809.7,519.2 774.1,519.9Z" fill="#9E7650"/>
<path d="M775.5,522 L819,520.6 818.3,522 794,523.5 775.5,523.2Z" fill="#C4A886"/>
<path d="M781,523.3 L778.5,529 M792,523.5 L790,529 M811,522.5 L811,529" stroke="#B89A78" stroke-width="0.9" fill="none"/>
<path d="M732.1,538.4 L759.9,535.6 769.8,532.7 809.7,531.3 818.3,532 833.9,539.1 842.5,544.1 845.3,548.1 732.1,548.7Z" fill="#DCD0BE"/>
<path d="M781.2,528.5 L809.7,528.5 811.1,531.3 769.8,532.7Z" fill="#E2D7C6"/>
<path d="M769.8,532 L808.3,531.3 805.4,532.9 768.4,534.3Z" fill="#54463C"/>
<path d="M732.1,538.4 L759.9,535.6 769.8,532.7 768,534.5 759.9,537 732.1,539.6Z" fill="#EBE2D4"/>
<g fill="#5A4A40"><rect x="763.4" y="539.9" width="6.4" height="1.8" rx=".8"/><rect x="773.4" y="539.9" width="5" height="1.8" rx=".8"/><rect x="789.8" y="539.7" width="8.5" height="2" rx=".8"/><rect x="801.2" y="539.7" width="9.9" height="2" rx=".8"/><rect x="821.1" y="539.9" width="10" height="1.8" rx=".8"/></g>
<path d="M732.1,548 L845.3,547.4 845.3,548.5 732.1,549.1Z" fill="#6A5A4E"/>
<path d="M820,531.5 L826,530.5 834,533.5 836,538 833.9,539.1 818.3,532Z" fill="#C8925A"/>
<rect x="825.6" y="526.5" width="1.5" height="5" fill="#6A4A30"/>
<rect x="726" y="538" width="6" height="1.2" fill="#D8A060"/>
</g>

<g id="pebbles">
<g filter="url(#blur1)"><polygon points="60,633.9 63.0,633.9 117.0,636.1 157.0,633.9 195.0,630.5 205.0,628.7 222.0,629.1 233.0,639.7 280.0,642.2 309.0,643.3 338.0,646.9 388.0,649.5 424.5,651.3 460.7,656.7 497.0,661.5 520.0,664.3 587.0,669.3 659.6,673.5 732.0,673.5 768.0,668.5 800.0,665.5 822.0,662.8 873.0,662.8 878.0,676.5 912.7,689.2 949.0,685.5 972.0,682.0 975,682.0 975,712 60,712" fill="#45372F"/></g>
<g filter="url(#blur15)"><ellipse cx="210.8" cy="627.4" rx="5.5" ry="3.4" fill="#2A211D"/><ellipse cx="212.1" cy="628.4" rx="5.5" ry="3.4" fill="#40332C"/><ellipse cx="212.5" cy="627.5" rx="3.9" ry="2.4" fill="#261E1B"/><ellipse cx="213.3" cy="628.7" rx="3.4" ry="2.1" fill="#2A211D"/><ellipse cx="218.7" cy="628.2" rx="3.9" ry="2.4" fill="#40332C"/><ellipse cx="221.5" cy="628.4" rx="5.9" ry="3.6" fill="#261E1B"/><ellipse cx="187.3" cy="629.6" rx="5.1" ry="3.1" fill="#2A211D"/><ellipse cx="186.5" cy="629.5" rx="6.1" ry="3.8" fill="#483A31"/><ellipse cx="184.6" cy="630.3" rx="6.1" ry="3.8" fill="#886E5C"/><ellipse cx="177.4" cy="630.3" rx="5.6" ry="3.4" fill="#72594A"/><ellipse cx="177.4" cy="630.8" rx="6.1" ry="3.8" fill="#2A211D"/><ellipse cx="177.2" cy="631.1" rx="5.5" ry="3.4" fill="#2A211D"/><ellipse cx="223.4" cy="631.1" rx="4.8" ry="3.1" fill="#2A211D" transform="rotate(-12 223.4 631.1)"/><ellipse cx="168.3" cy="632.7" rx="5.2" ry="3.2" fill="#372B25"/><ellipse cx="162.6" cy="633.0" rx="3.3" ry="2.0" fill="#483A31"/><ellipse cx="60.8" cy="632.9" rx="6.0" ry="3.7" fill="#483A31"/><ellipse cx="195.1" cy="632.6" rx="4.1" ry="1.8" fill="#886E5C" transform="rotate(15 195.1 632.6)"/><ellipse cx="69.9" cy="633.2" rx="5.6" ry="3.4" fill="#72594A"/><ellipse cx="76.2" cy="634.0" rx="4.7" ry="2.9" fill="#7C6454"/><ellipse cx="161.4" cy="633.1" rx="3.7" ry="2.0" fill="#2A211D" transform="rotate(-4 161.4 633.1)"/><ellipse cx="135.9" cy="634.6" rx="6.1" ry="3.7" fill="#40332C"/><ellipse cx="135.5" cy="634.5" rx="3.5" ry="2.1" fill="#72594A"/><ellipse cx="206.5" cy="633.6" rx="4.5" ry="3.0" fill="#65524A" transform="rotate(-2 206.5 633.6)"/><ellipse cx="132.6" cy="633.8" rx="3.5" ry="2.1" fill="#5A4A42"/><ellipse cx="99.8" cy="635.6" rx="3.3" ry="2.0" fill="#261E1B"/><ellipse cx="103.0" cy="635.6" rx="3.4" ry="2.1" fill="#2E2420"/><ellipse cx="182.9" cy="634.0" rx="6.4" ry="4.2" fill="#2E2420" transform="rotate(14 182.9 634.0)"/><ellipse cx="104.2" cy="635.8" rx="3.7" ry="2.3" fill="#685446"/><ellipse cx="184.3" cy="634.2" rx="7.3" ry="3.0" fill="#65524A" transform="rotate(-14 184.3 634.2)"/><ellipse cx="186.6" cy="634.2" rx="3.8" ry="2.1" fill="#40332C" transform="rotate(-1 186.6 634.2)"/><ellipse cx="109.3" cy="635.6" rx="6.0" ry="3.7" fill="#2A211D"/><ellipse cx="74.8" cy="634.7" rx="3.3" ry="2.1" fill="#2E2420" transform="rotate(22 74.8 634.7)"/><ellipse cx="173.7" cy="635.4" rx="5.1" ry="2.6" fill="#483A31" transform="rotate(3 173.7 635.4)"/><ellipse cx="81.1" cy="636.1" rx="4.3" ry="2.5" fill="#372B25" transform="rotate(-17 81.1 636.1)"/><ellipse cx="159.4" cy="637.0" rx="3.0" ry="1.9" fill="#372B25" transform="rotate(10 159.4 637.0)"/><ellipse cx="192.3" cy="637.2" rx="6.4" ry="3.5" fill="#261E1B" transform="rotate(18 192.3 637.2)"/><ellipse cx="232.1" cy="636.9" rx="4.8" ry="3.0" fill="#2A211D"/><ellipse cx="82.4" cy="637.6" rx="3.9" ry="1.6" fill="#D98F4C" transform="rotate(16 82.4 637.6)"/><ellipse cx="113.8" cy="637.8" rx="7.2" ry="3.2" fill="#2E2420" transform="rotate(-13 113.8 637.8)"/><ellipse cx="238.9" cy="638.8" rx="6.0" ry="3.7" fill="#685446"/><ellipse cx="156.4" cy="638.8" rx="5.5" ry="2.7" fill="#685446" transform="rotate(-5 156.4 638.8)"/><ellipse cx="155.3" cy="639.0" rx="3.5" ry="2.9" fill="#2E2420" transform="rotate(-24 155.3 639.0)"/><ellipse cx="87.8" cy="639.1" rx="5.2" ry="3.1" fill="#261E1B" transform="rotate(11 87.8 639.1)"/><ellipse cx="157.7" cy="639.5" rx="4.0" ry="3.1" fill="#2E2420" transform="rotate(4 157.7 639.5)"/><ellipse cx="187.5" cy="639.7" rx="6.6" ry="4.4" fill="#BCA288" transform="rotate(-9 187.5 639.7)"/><ellipse cx="234.0" cy="639.8" rx="3.7" ry="2.5" fill="#40332C" transform="rotate(23 234.0 639.8)"/><ellipse cx="211.0" cy="633.0" rx="12.0" ry="6.0" fill="#3A2A21"/><ellipse cx="201.0" cy="631.0" rx="5.0" ry="3.5" fill="#4A3528"/><ellipse cx="142.1" cy="640.5" rx="4.9" ry="3.0" fill="#261E1B" transform="rotate(14 142.1 640.5)"/><ellipse cx="245.5" cy="640.8" rx="4.0" ry="3.7" fill="#65524A" transform="rotate(6 245.5 640.8)"/><ellipse cx="124.8" cy="640.9" rx="4.4" ry="3.7" fill="#5A4A42" transform="rotate(-9 124.8 640.9)"/><ellipse cx="150.8" cy="641.0" rx="5.4" ry="2.3" fill="#483A31" transform="rotate(9 150.8 641.0)"/><ellipse cx="294.2" cy="641.7" rx="5.3" ry="3.3" fill="#2A211D"/><ellipse cx="103.9" cy="641.3" rx="5.0" ry="3.1" fill="#AEA092" transform="rotate(-15 103.9 641.3)"/><ellipse cx="55.4" cy="641.5" rx="5.5" ry="3.4" fill="#483A31" transform="rotate(-17 55.4 641.5)"/><ellipse cx="312.7" cy="643.2" rx="5.4" ry="3.3" fill="#65524A"/><ellipse cx="209.3" cy="642.4" rx="5.0" ry="3.1" fill="#685446" transform="rotate(5 209.3 642.4)"/><ellipse cx="315.2" cy="644.3" rx="4.4" ry="2.7" fill="#685446"/><ellipse cx="167.9" cy="643.2" rx="5.7" ry="2.6" fill="#40332C" transform="rotate(-5 167.9 643.2)"/><ellipse cx="279.8" cy="643.2" rx="6.3" ry="2.4" fill="#B49A80" transform="rotate(-17 279.8 643.2)"/><ellipse cx="308.9" cy="643.3" rx="5.8" ry="4.0" fill="#2E2420" transform="rotate(11 308.9 643.3)"/><ellipse cx="205.8" cy="643.8" rx="9.5" ry="4.9" fill="#261E1B" transform="rotate(-2 205.8 643.8)"/><ellipse cx="272.3" cy="643.8" rx="4.2" ry="3.0" fill="#261E1B" transform="rotate(22 272.3 643.8)"/><ellipse cx="280.5" cy="644.0" rx="4.2" ry="2.7" fill="#72594A" transform="rotate(-13 280.5 644.0)"/><ellipse cx="172.8" cy="644.1" rx="6.2" ry="3.8" fill="#2A211D" transform="rotate(6 172.8 644.1)"/><ellipse cx="114.5" cy="644.3" rx="5.4" ry="3.0" fill="#261E1B" transform="rotate(-2 114.5 644.3)"/><ellipse cx="309.1" cy="644.8" rx="7.3" ry="3.1" fill="#372B25" transform="rotate(-15 309.1 644.8)"/><ellipse cx="186.3" cy="645.3" rx="7.9" ry="3.4" fill="#483A31" transform="rotate(4 186.3 645.3)"/><ellipse cx="235.9" cy="645.4" rx="4.8" ry="2.7" fill="#72594A" transform="rotate(8 235.9 645.4)"/><ellipse cx="343.1" cy="647.3" rx="4.4" ry="2.7" fill="#5A4A42"/><ellipse cx="204.9" cy="645.8" rx="5.9" ry="3.7" fill="#685446" transform="rotate(-13 204.9 645.8)"/><ellipse cx="349.5" cy="645.6" rx="6.2" ry="3.8" fill="#72594A"/><ellipse cx="152.2" cy="646.0" rx="4.3" ry="2.4" fill="#72594A" transform="rotate(-12 152.2 646.0)"/><ellipse cx="350.6" cy="647.7" rx="4.7" ry="2.9" fill="#685446"/><ellipse cx="353.1" cy="648.1" rx="4.8" ry="3.0" fill="#372B25"/><ellipse cx="324.9" cy="646.3" rx="3.3" ry="1.8" fill="#2A211D" transform="rotate(8 324.9 646.3)"/><ellipse cx="360.8" cy="648.5" rx="5.1" ry="3.1" fill="#65524A"/><ellipse cx="287.0" cy="646.6" rx="5.9" ry="3.1" fill="#65524A" transform="rotate(0 287.0 646.6)"/><ellipse cx="233.8" cy="646.6" rx="8.2" ry="4.8" fill="#372B25" transform="rotate(1 233.8 646.6)"/><ellipse cx="366.9" cy="647.6" rx="3.7" ry="2.3" fill="#65524A"/><ellipse cx="270.2" cy="647.2" rx="5.4" ry="3.3" fill="#886E5C" transform="rotate(-22 270.2 647.2)"/><ellipse cx="164.1" cy="647.3" rx="5.8" ry="2.8" fill="#40332C" transform="rotate(16 164.1 647.3)"/><ellipse cx="374.2" cy="647.3" rx="3.9" ry="2.4" fill="#65524A"/><ellipse cx="235.2" cy="647.4" rx="6.5" ry="3.8" fill="#483A31" transform="rotate(19 235.2 647.4)"/><ellipse cx="379.0" cy="648.7" rx="4.2" ry="2.6" fill="#483A31"/><ellipse cx="383.6" cy="647.7" rx="5.0" ry="3.1" fill="#5A4A42"/><ellipse cx="365.2" cy="647.9" rx="3.5" ry="2.3" fill="#5A4A42" transform="rotate(14 365.2 647.9)"/><ellipse cx="229.4" cy="648.1" rx="5.5" ry="3.9" fill="#E2A062" transform="rotate(24 229.4 648.1)"/><ellipse cx="303.6" cy="648.3" rx="5.0" ry="4.0" fill="#886E5C" transform="rotate(17 303.6 648.3)"/><ellipse cx="395.4" cy="649.4" rx="5.5" ry="3.4" fill="#372B25"/><ellipse cx="395.4" cy="649.4" rx="5.8" ry="3.6" fill="#40332C"/><ellipse cx="286.3" cy="648.5" rx="6.3" ry="4.2" fill="#372B25" transform="rotate(24 286.3 648.5)"/><ellipse cx="397.7" cy="648.4" rx="4.4" ry="2.7" fill="#2A211D"/><ellipse cx="335.4" cy="648.5" rx="4.7" ry="2.4" fill="#261E1B" transform="rotate(25 335.4 648.5)"/><ellipse cx="176.0" cy="648.7" rx="6.2" ry="3.8" fill="#483A31" transform="rotate(-17 176.0 648.7)"/><ellipse cx="137.8" cy="649.0" rx="7.0" ry="3.7" fill="#DDA468" transform="rotate(20 137.8 649.0)"/><ellipse cx="408.8" cy="648.6" rx="4.5" ry="2.7" fill="#372B25"/><ellipse cx="328.7" cy="649.2" rx="3.9" ry="3.2" fill="#372B25" transform="rotate(12 328.7 649.2)"/><ellipse cx="58.7" cy="649.4" rx="7.5" ry="4.5" fill="#483A31" transform="rotate(-7 58.7 649.4)"/><ellipse cx="418.9" cy="651.3" rx="5.6" ry="3.4" fill="#261E1B"/><ellipse cx="349.4" cy="649.6" rx="4.2" ry="2.0" fill="#261E1B" transform="rotate(16 349.4 649.6)"/><ellipse cx="348.3" cy="649.8" rx="3.2" ry="2.7" fill="#72594A" transform="rotate(-1 348.3 649.8)"/><ellipse cx="349.7" cy="649.9" rx="4.6" ry="3.6" fill="#5A4A42" transform="rotate(0 349.7 649.9)"/><ellipse cx="340.6" cy="650.0" rx="5.7" ry="3.8" fill="#72594A" transform="rotate(8 340.6 650.0)"/><ellipse cx="393.9" cy="650.1" rx="3.7" ry="2.2" fill="#2A211D" transform="rotate(-5 393.9 650.1)"/><ellipse cx="83.7" cy="650.2" rx="6.6" ry="3.0" fill="#372B25" transform="rotate(-1 83.7 650.2)"/><ellipse cx="59.3" cy="650.2" rx="6.8" ry="2.7" fill="#261E1B" transform="rotate(2 59.3 650.2)"/><ellipse cx="413.2" cy="650.5" rx="3.6" ry="1.8" fill="#5A4A42" transform="rotate(6 413.2 650.5)"/><ellipse cx="355.8" cy="650.6" rx="6.9" ry="3.0" fill="#261E1B" transform="rotate(15 355.8 650.6)"/><ellipse cx="431.2" cy="651.4" rx="4.2" ry="2.6" fill="#372B25"/><ellipse cx="364.6" cy="651.1" rx="5.2" ry="3.1" fill="#372B25" transform="rotate(-21 364.6 651.1)"/><ellipse cx="312.0" cy="651.2" rx="5.0" ry="2.9" fill="#40332C" transform="rotate(12 312.0 651.2)"/><ellipse cx="411.8" cy="651.6" rx="4.7" ry="2.1" fill="#72594A" transform="rotate(5 411.8 651.6)"/><ellipse cx="299.7" cy="651.9" rx="4.5" ry="2.3" fill="#2E2420" transform="rotate(-10 299.7 651.9)"/><ellipse cx="82.1" cy="652.2" rx="7.5" ry="2.8" fill="#7C6454" transform="rotate(15 82.1 652.2)"/><ellipse cx="248.0" cy="652.4" rx="5.7" ry="3.1" fill="#372B25" transform="rotate(11 248.0 652.4)"/><ellipse cx="361.8" cy="652.8" rx="3.8" ry="2.5" fill="#C9B6A2" transform="rotate(1 361.8 652.8)"/><ellipse cx="433.7" cy="653.2" rx="3.8" ry="2.3" fill="#72594A" transform="rotate(-6 433.7 653.2)"/><ellipse cx="255.9" cy="653.2" rx="7.2" ry="4.2" fill="#BCA288" transform="rotate(-0 255.9 653.2)"/><ellipse cx="66.6" cy="653.3" rx="7.9" ry="5.0" fill="#886E5C" transform="rotate(7 66.6 653.3)"/><ellipse cx="313.1" cy="653.3" rx="6.1" ry="3.2" fill="#2E2420" transform="rotate(-2 313.1 653.3)"/><ellipse cx="450.3" cy="654.5" rx="5.0" ry="3.1" fill="#2A211D"/><ellipse cx="450.4" cy="655.6" rx="6.2" ry="3.8" fill="#2A211D"/><ellipse cx="356.7" cy="653.8" rx="3.8" ry="2.7" fill="#72594A" transform="rotate(-17 356.7 653.8)"/><ellipse cx="88.4" cy="654.3" rx="6.3" ry="3.8" fill="#2A211D" transform="rotate(8 88.4 654.3)"/><ellipse cx="396.0" cy="654.5" rx="7.4" ry="3.8" fill="#BCA288" transform="rotate(-14 396.0 654.5)"/><ellipse cx="457.9" cy="655.8" rx="4.3" ry="2.7" fill="#5A4A42"/><ellipse cx="165.9" cy="655.2" rx="9.5" ry="5.0" fill="#483A31" transform="rotate(-8 165.9 655.2)"/><ellipse cx="189.4" cy="655.6" rx="8.6" ry="4.3" fill="#483A31" transform="rotate(-12 189.4 655.6)"/><ellipse cx="422.5" cy="655.7" rx="6.6" ry="3.4" fill="#483A31" transform="rotate(-8 422.5 655.7)"/><ellipse cx="278.1" cy="655.9" rx="5.6" ry="4.3" fill="#372B25" transform="rotate(8 278.1 655.9)"/><ellipse cx="411.2" cy="656.0" rx="5.2" ry="2.7" fill="#261E1B" transform="rotate(21 411.2 656.0)"/><ellipse cx="417.3" cy="656.0" rx="3.8" ry="2.1" fill="#372B25" transform="rotate(-12 417.3 656.0)"/><ellipse cx="179.0" cy="656.0" rx="9.5" ry="4.2" fill="#40332C" transform="rotate(-23 179.0 656.0)"/><ellipse cx="220.8" cy="656.1" rx="7.5" ry="5.0" fill="#2E2420" transform="rotate(-17 220.8 656.1)"/><ellipse cx="273.5" cy="656.4" rx="7.3" ry="4.2" fill="#372B25" transform="rotate(18 273.5 656.4)"/><ellipse cx="113.7" cy="656.6" rx="7.7" ry="3.6" fill="#72594A" transform="rotate(-11 113.7 656.6)"/><ellipse cx="457.3" cy="656.8" rx="4.4" ry="3.0" fill="#C0A68A" transform="rotate(-16 457.3 656.8)"/><ellipse cx="473.1" cy="656.9" rx="5.8" ry="3.6" fill="#685446"/><ellipse cx="214.3" cy="657.0" rx="8.4" ry="4.9" fill="#40332C" transform="rotate(-16 214.3 657.0)"/><ellipse cx="474.6" cy="658.2" rx="5.5" ry="3.4" fill="#483A31"/><ellipse cx="287.0" cy="657.2" rx="5.7" ry="4.5" fill="#372B25" transform="rotate(-4 287.0 657.2)"/><ellipse cx="388.0" cy="657.2" rx="4.8" ry="3.2" fill="#685446" transform="rotate(-3 388.0 657.2)"/><ellipse cx="184.8" cy="657.3" rx="7.1" ry="5.9" fill="#72594A" transform="rotate(16 184.8 657.3)"/><ellipse cx="62.6" cy="658.1" rx="8.8" ry="4.9" fill="#65524A" transform="rotate(1 62.6 658.1)"/><ellipse cx="397.6" cy="658.1" rx="4.9" ry="2.4" fill="#261E1B" transform="rotate(-9 397.6 658.1)"/><ellipse cx="483.7" cy="658.0" rx="4.2" ry="2.6" fill="#483A31"/><ellipse cx="162.0" cy="658.4" rx="6.3" ry="4.3" fill="#BCA288" transform="rotate(8 162.0 658.4)"/><ellipse cx="214.0" cy="658.5" rx="7.8" ry="4.5" fill="#685446" transform="rotate(-16 214.0 658.5)"/><ellipse cx="350.1" cy="658.8" rx="5.4" ry="3.4" fill="#2A211D" transform="rotate(22 350.1 658.8)"/><ellipse cx="478.5" cy="658.9" rx="5.4" ry="3.9" fill="#2A211D" transform="rotate(14 478.5 658.9)"/><ellipse cx="457.8" cy="659.0" rx="7.2" ry="3.9" fill="#C9B6A2" transform="rotate(4 457.8 659.0)"/><ellipse cx="240.7" cy="659.2" rx="8.9" ry="4.5" fill="#2A211D" transform="rotate(-11 240.7 659.2)"/><ellipse cx="197.6" cy="659.3" rx="10.2" ry="5.7" fill="#BCA288" transform="rotate(16 197.6 659.3)"/><ellipse cx="159.1" cy="659.3" rx="6.4" ry="4.2" fill="#483A31" transform="rotate(19 159.1 659.3)"/><ellipse cx="121.4" cy="659.3" rx="8.9" ry="3.8" fill="#A68E78" transform="rotate(-3 121.4 659.3)"/><ellipse cx="207.7" cy="659.5" rx="8.5" ry="6.1" fill="#7C6454" transform="rotate(8 207.7 659.5)"/><ellipse cx="157.9" cy="659.6" rx="8.1" ry="5.5" fill="#483A31" transform="rotate(11 157.9 659.6)"/><ellipse cx="375.6" cy="659.8" rx="8.0" ry="4.0" fill="#483A31" transform="rotate(-2 375.6 659.8)"/><ellipse cx="296.5" cy="660.0" rx="5.2" ry="3.9" fill="#685446" transform="rotate(7 296.5 660.0)"/><ellipse cx="143.2" cy="660.0" rx="6.1" ry="4.5" fill="#7C6454" transform="rotate(-7 143.2 660.0)"/><ellipse cx="270.7" cy="660.3" rx="6.4" ry="4.4" fill="#261E1B" transform="rotate(-12 270.7 660.3)"/><ellipse cx="501.0" cy="660.2" rx="4.1" ry="2.5" fill="#483A31"/><ellipse cx="438.1" cy="660.6" rx="8.6" ry="4.1" fill="#2E2420" transform="rotate(-11 438.1 660.6)"/><ellipse cx="121.4" cy="660.6" rx="5.4" ry="4.3" fill="#886E5C" transform="rotate(6 121.4 660.6)"/><ellipse cx="63.6" cy="660.7" rx="8.4" ry="5.4" fill="#2A211D" transform="rotate(6 63.6 660.7)"/><ellipse cx="848.0" cy="671.0" rx="27.0" ry="11.0" fill="#3A2B24"/><ellipse cx="835.0" cy="668.0" rx="12.0" ry="7.0" fill="#4A372C"/><ellipse cx="247.3" cy="661.0" rx="5.5" ry="3.6" fill="#2A211D" transform="rotate(7 247.3 661.0)"/><ellipse cx="506.1" cy="661.4" rx="4.3" ry="2.6" fill="#2E2420"/><ellipse cx="361.9" cy="661.1" rx="9.6" ry="4.0" fill="#65524A" transform="rotate(22 361.9 661.1)"/><ellipse cx="243.9" cy="661.2" rx="6.3" ry="2.9" fill="#372B25" transform="rotate(4 243.9 661.2)"/><ellipse cx="351.0" cy="661.2" rx="7.1" ry="3.2" fill="#72594A" transform="rotate(4 351.0 661.2)"/><ellipse cx="866.6" cy="661.1" rx="4.0" ry="2.4" fill="#372B25"/><ellipse cx="829.3" cy="661.7" rx="4.3" ry="2.7" fill="#72594A"/><ellipse cx="830.1" cy="661.7" rx="4.7" ry="2.9" fill="#65524A"/><ellipse cx="845.2" cy="661.4" rx="3.8" ry="2.3" fill="#483A31"/><ellipse cx="843.5" cy="660.9" rx="4.6" ry="2.8" fill="#483A31"/><ellipse cx="864.7" cy="662.7" rx="4.7" ry="2.9" fill="#483A31"/><ellipse cx="159.0" cy="661.3" rx="8.3" ry="5.3" fill="#483A31" transform="rotate(9 159.0 661.3)"/><ellipse cx="508.0" cy="661.9" rx="5.1" ry="3.1" fill="#483A31"/><ellipse cx="296.3" cy="661.6" rx="6.1" ry="4.2" fill="#2A211D" transform="rotate(21 296.3 661.6)"/><ellipse cx="866.0" cy="667.0" rx="9.0" ry="6.0" fill="#33261F"/><ellipse cx="514.6" cy="663.1" rx="5.3" ry="3.3" fill="#72594A"/><ellipse cx="839.9" cy="662.4" rx="5.2" ry="2.6" fill="#685446" transform="rotate(-19 839.9 662.4)"/><ellipse cx="516.7" cy="662.2" rx="5.8" ry="3.5" fill="#40332C"/><ellipse cx="517.0" cy="664.3" rx="5.8" ry="3.5" fill="#261E1B"/><ellipse cx="421.2" cy="662.5" rx="7.0" ry="2.7" fill="#2E2420" transform="rotate(14 421.2 662.5)"/><ellipse cx="339.8" cy="662.6" rx="6.2" ry="3.7" fill="#65524A" transform="rotate(-1 339.8 662.6)"/><ellipse cx="235.1" cy="662.7" rx="9.3" ry="4.7" fill="#261E1B" transform="rotate(-23 235.1 662.7)"/><ellipse cx="520.9" cy="662.6" rx="5.8" ry="3.5" fill="#685446"/><ellipse cx="240.1" cy="662.9" rx="9.9" ry="4.0" fill="#261E1B" transform="rotate(23 240.1 662.9)"/><ellipse cx="869.3" cy="663.0" rx="5.9" ry="2.2" fill="#40332C" transform="rotate(16 869.3 663.0)"/><ellipse cx="459.2" cy="663.1" rx="8.4" ry="4.7" fill="#D98F4C" transform="rotate(-18 459.2 663.1)"/><ellipse cx="315.6" cy="663.1" rx="7.8" ry="5.3" fill="#261E1B" transform="rotate(4 315.6 663.1)"/><ellipse cx="524.3" cy="663.3" rx="5.8" ry="3.6" fill="#372B25"/><ellipse cx="524.8" cy="664.3" rx="3.8" ry="2.4" fill="#483A31"/><ellipse cx="527.6" cy="665.1" rx="5.0" ry="3.1" fill="#2E2420"/><ellipse cx="352.1" cy="663.4" rx="4.8" ry="3.5" fill="#2E2420" transform="rotate(-3 352.1 663.4)"/><ellipse cx="804.7" cy="665.0" rx="5.5" ry="3.4" fill="#2E2420"/><ellipse cx="306.0" cy="663.6" rx="6.7" ry="4.2" fill="#2A211D" transform="rotate(10 306.0 663.6)"/><ellipse cx="88.8" cy="663.6" rx="8.7" ry="4.3" fill="#C0A68A" transform="rotate(18 88.8 663.6)"/><ellipse cx="459.8" cy="663.7" rx="5.8" ry="3.2" fill="#7C6454" transform="rotate(3 459.8 663.7)"/><ellipse cx="121.6" cy="663.7" rx="8.7" ry="5.2" fill="#7C6454" transform="rotate(-15 121.6 663.7)"/><ellipse cx="177.1" cy="663.8" rx="7.3" ry="4.2" fill="#372B25" transform="rotate(-20 177.1 663.8)"/><ellipse cx="533.3" cy="664.0" rx="3.6" ry="2.2" fill="#2E2420"/><ellipse cx="411.7" cy="663.9" rx="5.8" ry="3.3" fill="#886E5C" transform="rotate(-16 411.7 663.9)"/><ellipse cx="168.3" cy="663.9" rx="6.9" ry="3.7" fill="#40332C" transform="rotate(12 168.3 663.9)"/><ellipse cx="496.4" cy="663.9" rx="4.7" ry="2.5" fill="#372B25" transform="rotate(11 496.4 663.9)"/><ellipse cx="450.7" cy="664.0" rx="5.2" ry="3.0" fill="#40332C" transform="rotate(14 450.7 664.0)"/><ellipse cx="536.9" cy="665.6" rx="4.7" ry="2.9" fill="#2E2420"/><ellipse cx="179.4" cy="664.1" rx="8.2" ry="4.7" fill="#5A4A42" transform="rotate(-6 179.4 664.1)"/><ellipse cx="133.6" cy="664.1" rx="9.8" ry="5.5" fill="#EBB070" transform="rotate(17 133.6 664.1)"/><ellipse cx="474.2" cy="664.2" rx="5.5" ry="4.5" fill="#EBB070" transform="rotate(-15 474.2 664.2)"/><ellipse cx="808.2" cy="664.3" rx="3.3" ry="2.7" fill="#7C6454" transform="rotate(19 808.2 664.3)"/><ellipse cx="833.4" cy="664.4" rx="6.4" ry="2.9" fill="#886E5C" transform="rotate(-5 833.4 664.4)"/><ellipse cx="457.1" cy="664.4" rx="5.8" ry="3.6" fill="#685446" transform="rotate(3 457.1 664.4)"/><ellipse cx="542.8" cy="665.8" rx="3.5" ry="2.2" fill="#7C6454"/><ellipse cx="222.8" cy="664.6" rx="6.1" ry="4.5" fill="#5A4A42" transform="rotate(-9 222.8 664.6)"/><ellipse cx="155.4" cy="664.7" rx="11.8" ry="6.4" fill="#2E2420" transform="rotate(-18 155.4 664.7)"/><ellipse cx="545.1" cy="664.2" rx="4.2" ry="2.6" fill="#40332C"/><ellipse cx="249.1" cy="664.8" rx="7.9" ry="5.3" fill="#886E5C" transform="rotate(10 249.1 664.8)"/><ellipse cx="278.3" cy="664.8" rx="6.7" ry="5.8" fill="#2E2420" transform="rotate(-24 278.3 664.8)"/><ellipse cx="276.5" cy="665.0" rx="9.4" ry="5.3" fill="#685446" transform="rotate(4 276.5 665.0)"/><ellipse cx="787.6" cy="667.1" rx="6.0" ry="3.7" fill="#72594A"/><ellipse cx="786.9" cy="665.6" rx="4.1" ry="2.5" fill="#886E5C"/><ellipse cx="506.0" cy="665.3" rx="6.9" ry="3.4" fill="#65524A" transform="rotate(4 506.0 665.3)"/><ellipse cx="56.8" cy="665.3" rx="6.6" ry="4.4" fill="#2E2420" transform="rotate(-23 56.8 665.3)"/><ellipse cx="63.9" cy="665.5" rx="6.5" ry="3.5" fill="#40332C" transform="rotate(23 63.9 665.5)"/><ellipse cx="534.7" cy="665.5" rx="4.9" ry="2.0" fill="#483A31" transform="rotate(-14 534.7 665.5)"/><ellipse cx="123.8" cy="665.6" rx="10.9" ry="5.4" fill="#7C6454" transform="rotate(14 123.8 665.6)"/><ellipse cx="492.3" cy="665.6" rx="5.8" ry="4.0" fill="#483A31" transform="rotate(16 492.3 665.6)"/><ellipse cx="780.8" cy="665.9" rx="4.2" ry="2.6" fill="#40332C"/><ellipse cx="278.1" cy="665.8" rx="10.0" ry="5.8" fill="#A68E78" transform="rotate(13 278.1 665.8)"/><ellipse cx="515.3" cy="665.9" rx="3.4" ry="2.1" fill="#2A211D" transform="rotate(-17 515.3 665.9)"/><ellipse cx="544.6" cy="666.0" rx="5.9" ry="2.9" fill="#2E2420" transform="rotate(-24 544.6 666.0)"/><ellipse cx="520.8" cy="666.1" rx="5.2" ry="2.3" fill="#2A211D" transform="rotate(-23 520.8 666.1)"/><ellipse cx="802.1" cy="666.1" rx="4.5" ry="2.2" fill="#2A211D" transform="rotate(16 802.1 666.1)"/><ellipse cx="62.5" cy="666.1" rx="7.2" ry="4.5" fill="#483A31" transform="rotate(6 62.5 666.1)"/><ellipse cx="356.4" cy="666.3" rx="6.2" ry="4.0" fill="#261E1B" transform="rotate(-10 356.4 666.3)"/><ellipse cx="363.6" cy="666.4" rx="8.9" ry="3.6" fill="#483A31" transform="rotate(-8 363.6 666.4)"/><ellipse cx="570.2" cy="667.8" rx="6.0" ry="3.7" fill="#2A211D"/><ellipse cx="847.9" cy="666.6" rx="4.1" ry="2.5" fill="#483A31" transform="rotate(-9 847.9 666.6)"/><ellipse cx="575.0" cy="666.6" rx="4.0" ry="2.5" fill="#7C6454"/><ellipse cx="410.6" cy="666.9" rx="7.6" ry="5.2" fill="#685446" transform="rotate(13 410.6 666.9)"/><ellipse cx="577.9" cy="667.9" rx="5.5" ry="3.4" fill="#72594A"/><ellipse cx="338.8" cy="667.5" rx="6.1" ry="4.5" fill="#261E1B" transform="rotate(-22 338.8 667.5)"/><ellipse cx="499.0" cy="667.8" rx="4.1" ry="2.3" fill="#2E2420" transform="rotate(1 499.0 667.8)"/><ellipse cx="259.9" cy="667.9" rx="11.4" ry="6.6" fill="#72594A" transform="rotate(-22 259.9 667.9)"/><ellipse cx="761.0" cy="668.9" rx="5.1" ry="3.1" fill="#483A31"/><ellipse cx="476.5" cy="668.0" rx="5.2" ry="3.7" fill="#886E5C" transform="rotate(17 476.5 668.0)"/><ellipse cx="550.7" cy="668.1" rx="3.8" ry="2.7" fill="#B49A80" transform="rotate(17 550.7 668.1)"/><ellipse cx="575.9" cy="668.1" rx="4.2" ry="2.9" fill="#685446" transform="rotate(23 575.9 668.1)"/><ellipse cx="517.4" cy="668.2" rx="6.9" ry="3.1" fill="#2E2420" transform="rotate(-24 517.4 668.2)"/><ellipse cx="401.6" cy="668.3" rx="5.8" ry="4.7" fill="#261E1B" transform="rotate(3 401.6 668.3)"/><ellipse cx="873.9" cy="668.3" rx="5.3" ry="3.3" fill="#2E2420" transform="rotate(21 873.9 668.3)"/><ellipse cx="450.4" cy="668.4" rx="9.8" ry="4.4" fill="#72594A" transform="rotate(-10 450.4 668.4)"/><ellipse cx="780.9" cy="668.4" rx="4.6" ry="2.8" fill="#685446" transform="rotate(-13 780.9 668.4)"/><ellipse cx="856.2" cy="668.4" rx="5.4" ry="3.9" fill="#7C6454" transform="rotate(-9 856.2 668.4)"/><ellipse cx="599.1" cy="670.3" rx="5.5" ry="3.4" fill="#2A211D"/><ellipse cx="339.6" cy="668.5" rx="8.3" ry="4.2" fill="#261E1B" transform="rotate(-8 339.6 668.5)"/><ellipse cx="555.1" cy="668.5" rx="5.3" ry="3.5" fill="#261E1B" transform="rotate(0 555.1 668.5)"/><ellipse cx="756.9" cy="670.1" rx="4.3" ry="2.7" fill="#372B25"/><ellipse cx="756.1" cy="670.3" rx="4.7" ry="2.9" fill="#261E1B"/><ellipse cx="308.8" cy="668.7" rx="8.7" ry="3.9" fill="#261E1B" transform="rotate(-2 308.8 668.7)"/><ellipse cx="755.9" cy="670.6" rx="4.5" ry="2.8" fill="#72594A"/><ellipse cx="230.6" cy="668.8" rx="8.2" ry="5.4" fill="#685446" transform="rotate(8 230.6 668.8)"/><ellipse cx="392.4" cy="668.9" rx="7.0" ry="5.9" fill="#2E2420" transform="rotate(3 392.4 668.9)"/><ellipse cx="503.2" cy="669.0" rx="6.1" ry="4.1" fill="#40332C" transform="rotate(21 503.2 669.0)"/><ellipse cx="111.7" cy="669.2" rx="12.4" ry="6.6" fill="#C0A68A" transform="rotate(21 111.7 669.2)"/><ellipse cx="611.5" cy="670.5" rx="3.6" ry="2.2" fill="#72594A"/><ellipse cx="752.0" cy="670.6" rx="5.1" ry="3.2" fill="#372B25"/><ellipse cx="238.4" cy="669.3" rx="8.9" ry="6.6" fill="#372B25" transform="rotate(23 238.4 669.3)"/><ellipse cx="613.3" cy="671.2" rx="4.3" ry="2.7" fill="#2A211D"/><ellipse cx="806.2" cy="669.4" rx="7.5" ry="3.0" fill="#685446" transform="rotate(13 806.2 669.4)"/><ellipse cx="844.2" cy="669.5" rx="5.3" ry="3.3" fill="#5A4A42" transform="rotate(-7 844.2 669.5)"/><ellipse cx="357.7" cy="669.5" rx="8.3" ry="4.7" fill="#483A31" transform="rotate(14 357.7 669.5)"/><ellipse cx="540.7" cy="669.6" rx="3.4" ry="2.9" fill="#685446" transform="rotate(13 540.7 669.6)"/><ellipse cx="804.5" cy="669.9" rx="5.6" ry="3.4" fill="#A68E78" transform="rotate(16 804.5 669.9)"/><ellipse cx="624.0" cy="670.5" rx="4.6" ry="2.8" fill="#2A211D"/><ellipse cx="853.9" cy="669.9" rx="5.0" ry="2.2" fill="#AEA092" transform="rotate(-19 853.9 669.9)"/><ellipse cx="283.7" cy="670.1" rx="8.9" ry="4.9" fill="#685446" transform="rotate(2 283.7 670.1)"/><ellipse cx="825.0" cy="670.2" rx="5.7" ry="4.4" fill="#C0A68A" transform="rotate(19 825.0 670.2)"/><ellipse cx="527.3" cy="670.2" rx="5.6" ry="3.1" fill="#7C6454" transform="rotate(8 527.3 670.2)"/><ellipse cx="631.0" cy="671.2" rx="3.7" ry="2.3" fill="#5A4A42"/><ellipse cx="405.0" cy="670.5" rx="8.0" ry="5.6" fill="#40332C" transform="rotate(16 405.0 670.5)"/><ellipse cx="859.2" cy="670.6" rx="6.7" ry="3.0" fill="#72594A" transform="rotate(-6 859.2 670.6)"/><ellipse cx="556.0" cy="670.6" rx="5.2" ry="3.4" fill="#D98F4C" transform="rotate(-24 556.0 670.6)"/><ellipse cx="834.7" cy="670.7" rx="7.5" ry="4.2" fill="#2A211D" transform="rotate(10 834.7 670.7)"/><ellipse cx="826.1" cy="670.8" rx="5.5" ry="3.5" fill="#40332C" transform="rotate(16 826.1 670.8)"/><ellipse cx="639.0" cy="672.8" rx="4.9" ry="3.0" fill="#372B25"/><ellipse cx="738.9" cy="672.2" rx="3.6" ry="2.2" fill="#261E1B"/><ellipse cx="433.9" cy="671.2" rx="8.7" ry="5.6" fill="#886E5C" transform="rotate(12 433.9 671.2)"/><ellipse cx="873.5" cy="671.3" rx="6.6" ry="3.0" fill="#2A211D" transform="rotate(-8 873.5 671.3)"/><ellipse cx="647.9" cy="671.0" rx="3.5" ry="2.2" fill="#886E5C"/><ellipse cx="736.6" cy="673.1" rx="3.8" ry="2.3" fill="#65524A"/><ellipse cx="652.0" cy="671.3" rx="5.4" ry="3.3" fill="#40332C"/><ellipse cx="750.6" cy="671.7" rx="3.4" ry="2.8" fill="#372B25" transform="rotate(18 750.6 671.7)"/><ellipse cx="632.6" cy="671.7" rx="6.1" ry="2.8" fill="#A68E78" transform="rotate(-4 632.6 671.7)"/><ellipse cx="605.3" cy="671.8" rx="5.0" ry="1.9" fill="#372B25" transform="rotate(-15 605.3 671.8)"/><ellipse cx="530.1" cy="671.8" rx="4.7" ry="2.4" fill="#2E2420" transform="rotate(12 530.1 671.8)"/><ellipse cx="833.6" cy="671.8" rx="6.1" ry="4.5" fill="#261E1B" transform="rotate(7 833.6 671.8)"/><ellipse cx="657.7" cy="672.7" rx="3.7" ry="2.3" fill="#685446"/><ellipse cx="547.5" cy="672.0" rx="5.3" ry="4.0" fill="#5A4A42" transform="rotate(-12 547.5 672.0)"/><ellipse cx="703.0" cy="672.9" rx="4.5" ry="2.8" fill="#40332C"/><ellipse cx="681.8" cy="673.3" rx="3.9" ry="2.4" fill="#261E1B"/><ellipse cx="705.4" cy="672.3" rx="5.1" ry="3.1" fill="#2A211D"/><ellipse cx="675.6" cy="673.2" rx="5.3" ry="3.2" fill="#2E2420"/><ellipse cx="689.0" cy="672.3" rx="5.0" ry="3.1" fill="#2A211D"/><ellipse cx="663.4" cy="672.0" rx="5.8" ry="3.6" fill="#372B25"/><ellipse cx="704.4" cy="672.7" rx="3.7" ry="2.3" fill="#483A31"/><ellipse cx="659.8" cy="673.5" rx="5.0" ry="3.1" fill="#261E1B"/><ellipse cx="721.0" cy="673.5" rx="4.3" ry="2.6" fill="#483A31"/><ellipse cx="692.1" cy="673.6" rx="3.3" ry="2.0" fill="#40332C"/><ellipse cx="694.6" cy="672.3" rx="6.0" ry="3.7" fill="#372B25"/><ellipse cx="619.7" cy="672.0" rx="5.6" ry="3.3" fill="#7C6454" transform="rotate(19 619.7 672.0)"/><ellipse cx="616.7" cy="672.2" rx="7.6" ry="4.0" fill="#A68E78" transform="rotate(-14 616.7 672.2)"/><ellipse cx="591.0" cy="672.2" rx="5.3" ry="2.0" fill="#483A31" transform="rotate(-11 591.0 672.2)"/><ellipse cx="493.5" cy="672.2" rx="6.6" ry="5.2" fill="#5A4A42" transform="rotate(-6 493.5 672.2)"/><ellipse cx="324.6" cy="672.2" rx="11.2" ry="6.3" fill="#372B25" transform="rotate(-18 324.6 672.2)"/><ellipse cx="267.3" cy="672.3" rx="9.9" ry="4.6" fill="#AEA092" transform="rotate(-17 267.3 672.3)"/><ellipse cx="475.8" cy="672.6" rx="9.3" ry="3.9" fill="#685446" transform="rotate(15 475.8 672.6)"/><ellipse cx="771.1" cy="672.6" rx="6.1" ry="3.1" fill="#2A211D" transform="rotate(22 771.1 672.6)"/><ellipse cx="853.7" cy="672.7" rx="7.7" ry="4.1" fill="#261E1B" transform="rotate(-14 853.7 672.7)"/><ellipse cx="445.2" cy="672.7" rx="8.1" ry="2.9" fill="#E2A062" transform="rotate(24 445.2 672.7)"/><ellipse cx="588.8" cy="672.7" rx="8.1" ry="3.9" fill="#372B25" transform="rotate(-7 588.8 672.7)"/><ellipse cx="504.1" cy="672.8" rx="7.9" ry="3.8" fill="#72594A" transform="rotate(-5 504.1 672.8)"/><ellipse cx="629.5" cy="672.8" rx="4.6" ry="3.6" fill="#5A4A42" transform="rotate(4 629.5 672.8)"/><ellipse cx="581.7" cy="672.9" rx="4.5" ry="2.5" fill="#40332C" transform="rotate(2 581.7 672.9)"/><ellipse cx="703.7" cy="673.0" rx="3.4" ry="2.3" fill="#65524A" transform="rotate(18 703.7 673.0)"/><ellipse cx="748.3" cy="673.0" rx="6.3" ry="3.5" fill="#261E1B" transform="rotate(-9 748.3 673.0)"/><ellipse cx="402.6" cy="673.1" rx="10.8" ry="4.2" fill="#40332C" transform="rotate(-23 402.6 673.1)"/><ellipse cx="482.6" cy="673.1" rx="6.4" ry="3.1" fill="#372B25" transform="rotate(-15 482.6 673.1)"/><ellipse cx="772.0" cy="673.3" rx="6.7" ry="4.9" fill="#372B25" transform="rotate(23 772.0 673.3)"/><ellipse cx="874.0" cy="673.3" rx="7.3" ry="3.1" fill="#261E1B" transform="rotate(-17 874.0 673.3)"/><ellipse cx="633.3" cy="673.3" rx="4.9" ry="2.8" fill="#2A211D" transform="rotate(-16 633.3 673.3)"/><ellipse cx="451.4" cy="673.4" rx="7.2" ry="6.2" fill="#2E2420" transform="rotate(13 451.4 673.4)"/><ellipse cx="816.3" cy="673.4" rx="5.7" ry="4.0" fill="#C9B6A2" transform="rotate(13 816.3 673.4)"/><ellipse cx="469.3" cy="673.4" rx="7.6" ry="4.0" fill="#261E1B" transform="rotate(-0 469.3 673.4)"/><ellipse cx="522.3" cy="673.4" rx="4.9" ry="3.0" fill="#685446" transform="rotate(17 522.3 673.4)"/><ellipse cx="719.5" cy="673.5" rx="4.6" ry="3.0" fill="#C98040" transform="rotate(-13 719.5 673.5)"/><ellipse cx="485.5" cy="673.6" rx="9.2" ry="4.0" fill="#483A31" transform="rotate(-1 485.5 673.6)"/><ellipse cx="776.5" cy="673.6" rx="4.5" ry="2.7" fill="#2A211D" transform="rotate(24 776.5 673.6)"/><ellipse cx="727.1" cy="673.7" rx="5.5" ry="2.3" fill="#2A211D" transform="rotate(20 727.1 673.7)"/><ellipse cx="328.8" cy="674.0" rx="9.8" ry="4.2" fill="#40332C" transform="rotate(5 328.8 674.0)"/><ellipse cx="871.5" cy="674.0" rx="5.1" ry="2.9" fill="#261E1B" transform="rotate(-12 871.5 674.0)"/><ellipse cx="334.0" cy="674.0" rx="8.2" ry="5.5" fill="#372B25" transform="rotate(-1 334.0 674.0)"/><ellipse cx="632.2" cy="674.1" rx="6.0" ry="2.7" fill="#261E1B" transform="rotate(-18 632.2 674.1)"/><ellipse cx="874.8" cy="674.2" rx="9.2" ry="4.3" fill="#2E2420" transform="rotate(-21 874.8 674.2)"/><ellipse cx="768.1" cy="674.2" rx="6.6" ry="5.2" fill="#261E1B" transform="rotate(-21 768.1 674.2)"/><ellipse cx="705.1" cy="674.2" rx="3.1" ry="2.3" fill="#2E2420" transform="rotate(10 705.1 674.2)"/><ellipse cx="573.7" cy="674.3" rx="6.7" ry="4.2" fill="#372B25" transform="rotate(-2 573.7 674.3)"/><ellipse cx="353.7" cy="674.4" rx="9.8" ry="4.6" fill="#2E2420" transform="rotate(-14 353.7 674.4)"/><ellipse cx="672.3" cy="674.4" rx="7.4" ry="4.1" fill="#2A211D" transform="rotate(21 672.3 674.4)"/><ellipse cx="605.5" cy="674.5" rx="6.5" ry="4.2" fill="#2E2420" transform="rotate(-4 605.5 674.5)"/><ellipse cx="752.5" cy="674.6" rx="6.5" ry="4.1" fill="#72594A" transform="rotate(-18 752.5 674.6)"/><ellipse cx="614.5" cy="674.6" rx="5.3" ry="3.0" fill="#685446" transform="rotate(-2 614.5 674.6)"/><ellipse cx="703.0" cy="674.6" rx="4.5" ry="3.4" fill="#372B25" transform="rotate(25 703.0 674.6)"/><ellipse cx="746.5" cy="674.6" rx="5.8" ry="2.9" fill="#7C6454" transform="rotate(15 746.5 674.6)"/><ellipse cx="635.6" cy="674.7" rx="4.0" ry="2.2" fill="#261E1B" transform="rotate(-14 635.6 674.7)"/><ellipse cx="427.8" cy="674.8" rx="6.9" ry="4.8" fill="#2E2420" transform="rotate(-23 427.8 674.8)"/><ellipse cx="695.5" cy="674.8" rx="5.5" ry="3.7" fill="#65524A" transform="rotate(16 695.5 674.8)"/><ellipse cx="877.9" cy="676.8" rx="5.0" ry="3.0" fill="#2A211D"/><ellipse cx="745.0" cy="675.0" rx="4.4" ry="3.1" fill="#261E1B" transform="rotate(-15 745.0 675.0)"/><ellipse cx="806.5" cy="675.0" rx="6.6" ry="4.2" fill="#886E5C" transform="rotate(21 806.5 675.0)"/><ellipse cx="827.3" cy="675.0" rx="9.1" ry="4.4" fill="#C98040" transform="rotate(-8 827.3 675.0)"/><ellipse cx="728.3" cy="675.2" rx="7.7" ry="3.3" fill="#685446" transform="rotate(23 728.3 675.2)"/><ellipse cx="818.1" cy="675.3" rx="5.2" ry="3.7" fill="#7C6454" transform="rotate(15 818.1 675.3)"/><ellipse cx="704.4" cy="675.3" rx="4.7" ry="3.2" fill="#5A4A42" transform="rotate(20 704.4 675.3)"/><ellipse cx="532.0" cy="675.4" rx="6.0" ry="3.0" fill="#2A211D" transform="rotate(1 532.0 675.4)"/><ellipse cx="598.7" cy="675.6" rx="5.4" ry="3.7" fill="#2A211D" transform="rotate(2 598.7 675.6)"/><ellipse cx="792.6" cy="675.6" rx="9.0" ry="4.6" fill="#685446" transform="rotate(16 792.6 675.6)"/><ellipse cx="508.4" cy="675.6" rx="5.3" ry="4.8" fill="#372B25" transform="rotate(-2 508.4 675.6)"/><ellipse cx="874.4" cy="675.6" rx="7.6" ry="3.8" fill="#261E1B" transform="rotate(-5 874.4 675.6)"/><ellipse cx="688.5" cy="675.7" rx="5.7" ry="3.0" fill="#72594A" transform="rotate(25 688.5 675.7)"/><ellipse cx="563.6" cy="675.7" rx="7.0" ry="4.3" fill="#40332C" transform="rotate(-9 563.6 675.7)"/><ellipse cx="618.2" cy="676.1" rx="7.0" ry="3.8" fill="#372B25" transform="rotate(-25 618.2 676.1)"/><ellipse cx="510.5" cy="676.1" rx="7.0" ry="3.3" fill="#372B25" transform="rotate(-7 510.5 676.1)"/><ellipse cx="482.1" cy="676.2" rx="6.9" ry="5.6" fill="#483A31" transform="rotate(5 482.1 676.2)"/><ellipse cx="776.2" cy="676.2" rx="6.2" ry="4.3" fill="#BCA288" transform="rotate(-16 776.2 676.2)"/><ellipse cx="769.8" cy="676.3" rx="4.3" ry="2.5" fill="#372B25" transform="rotate(2 769.8 676.3)"/><ellipse cx="815.5" cy="676.3" rx="7.8" ry="2.8" fill="#40332C" transform="rotate(19 815.5 676.3)"/><ellipse cx="814.6" cy="676.3" rx="7.5" ry="3.8" fill="#C0A68A" transform="rotate(12 814.6 676.3)"/><ellipse cx="500.4" cy="676.4" rx="9.4" ry="5.3" fill="#372B25" transform="rotate(23 500.4 676.4)"/><ellipse cx="690.0" cy="676.5" rx="4.8" ry="3.6" fill="#40332C" transform="rotate(-3 690.0 676.5)"/><ellipse cx="838.8" cy="676.5" rx="9.4" ry="5.8" fill="#2E2420" transform="rotate(-16 838.8 676.5)"/><ellipse cx="749.2" cy="676.6" rx="6.9" ry="2.4" fill="#261E1B" transform="rotate(1 749.2 676.6)"/><ellipse cx="600.9" cy="676.8" rx="9.2" ry="3.8" fill="#886E5C" transform="rotate(-2 600.9 676.8)"/><ellipse cx="525.7" cy="677.0" rx="8.5" ry="5.2" fill="#5A4A42" transform="rotate(6 525.7 677.0)"/><ellipse cx="678.2" cy="677.0" rx="5.1" ry="3.8" fill="#2E2420" transform="rotate(-11 678.2 677.0)"/><ellipse cx="728.5" cy="677.1" rx="6.5" ry="4.2" fill="#483A31" transform="rotate(3 728.5 677.1)"/><ellipse cx="727.4" cy="677.1" rx="7.1" ry="3.8" fill="#C98040" transform="rotate(-24 727.4 677.1)"/><ellipse cx="499.5" cy="677.2" rx="9.1" ry="4.0" fill="#2E2420" transform="rotate(16 499.5 677.2)"/><ellipse cx="838.4" cy="677.6" rx="10.6" ry="5.0" fill="#685446" transform="rotate(-9 838.4 677.6)"/><ellipse cx="881.5" cy="677.6" rx="6.9" ry="2.8" fill="#886E5C" transform="rotate(-0 881.5 677.6)"/><ellipse cx="527.6" cy="677.6" rx="8.4" ry="4.8" fill="#7C6454" transform="rotate(-6 527.6 677.6)"/><ellipse cx="699.3" cy="677.8" rx="5.9" ry="2.7" fill="#685446" transform="rotate(-13 699.3 677.8)"/><ellipse cx="876.5" cy="678.0" rx="6.1" ry="3.2" fill="#2E2420" transform="rotate(-16 876.5 678.0)"/><ellipse cx="663.0" cy="678.1" rx="6.0" ry="3.3" fill="#C9B6A2" transform="rotate(-2 663.0 678.1)"/><ellipse cx="541.9" cy="678.4" rx="5.9" ry="3.4" fill="#483A31" transform="rotate(21 541.9 678.4)"/><ellipse cx="636.0" cy="678.5" rx="5.5" ry="3.1" fill="#C98040" transform="rotate(-7 636.0 678.5)"/><ellipse cx="689.5" cy="678.6" rx="7.3" ry="3.2" fill="#886E5C" transform="rotate(-14 689.5 678.6)"/><ellipse cx="779.9" cy="678.6" rx="8.3" ry="4.8" fill="#261E1B" transform="rotate(-6 779.9 678.6)"/><ellipse cx="703.6" cy="678.7" rx="5.9" ry="2.2" fill="#AEA092" transform="rotate(5 703.6 678.7)"/><ellipse cx="557.9" cy="678.9" rx="6.3" ry="4.6" fill="#2E2420" transform="rotate(-4 557.9 678.9)"/><ellipse cx="460.3" cy="679.2" rx="10.8" ry="6.0" fill="#AEA092" transform="rotate(-6 460.3 679.2)"/><ellipse cx="532.6" cy="679.2" rx="6.4" ry="3.4" fill="#72594A" transform="rotate(-24 532.6 679.2)"/><ellipse cx="811.3" cy="679.3" rx="8.5" ry="4.7" fill="#261E1B" transform="rotate(-24 811.3 679.3)"/><ellipse cx="783.3" cy="679.3" rx="7.3" ry="3.2" fill="#2A211D" transform="rotate(-18 783.3 679.3)"/><ellipse cx="625.2" cy="679.5" rx="6.4" ry="2.6" fill="#40332C" transform="rotate(-0 625.2 679.5)"/><ellipse cx="655.3" cy="679.6" rx="6.9" ry="3.7" fill="#483A31" transform="rotate(24 655.3 679.6)"/><ellipse cx="779.5" cy="679.6" rx="6.6" ry="3.2" fill="#2E2420" transform="rotate(10 779.5 679.6)"/><ellipse cx="710.7" cy="679.8" rx="9.1" ry="3.5" fill="#5A4A42" transform="rotate(-6 710.7 679.8)"/><ellipse cx="785.6" cy="680.1" rx="11.2" ry="4.3" fill="#7C6454" transform="rotate(4 785.6 680.1)"/><ellipse cx="870.8" cy="680.1" rx="10.0" ry="5.2" fill="#483A31" transform="rotate(22 870.8 680.1)"/><ellipse cx="738.8" cy="680.3" rx="5.9" ry="3.1" fill="#483A31" transform="rotate(7 738.8 680.3)"/><ellipse cx="892.9" cy="680.6" rx="4.7" ry="2.9" fill="#886E5C"/><ellipse cx="728.5" cy="680.7" rx="5.6" ry="3.7" fill="#DDA468" transform="rotate(-22 728.5 680.7)"/><ellipse cx="677.4" cy="680.9" rx="6.7" ry="3.9" fill="#261E1B" transform="rotate(-12 677.4 680.9)"/><ellipse cx="730.8" cy="681.0" rx="8.5" ry="3.5" fill="#65524A" transform="rotate(-23 730.8 681.0)"/><ellipse cx="591.5" cy="681.0" rx="8.7" ry="5.5" fill="#2E2420" transform="rotate(-14 591.5 681.0)"/><ellipse cx="724.0" cy="681.1" rx="7.0" ry="3.3" fill="#72594A" transform="rotate(19 724.0 681.1)"/><ellipse cx="967.7" cy="680.8" rx="5.9" ry="3.6" fill="#483A31"/><ellipse cx="632.4" cy="681.2" rx="9.6" ry="5.0" fill="#40332C" transform="rotate(20 632.4 681.2)"/><ellipse cx="743.3" cy="681.3" rx="7.2" ry="2.7" fill="#DDA468" transform="rotate(24 743.3 681.3)"/><ellipse cx="966.6" cy="682.9" rx="5.7" ry="3.5" fill="#261E1B"/><ellipse cx="895.3" cy="681.9" rx="5.5" ry="3.4" fill="#685446"/><ellipse cx="775.5" cy="681.9" rx="7.4" ry="4.5" fill="#2E2420" transform="rotate(5 775.5 681.9)"/><ellipse cx="962.0" cy="681.5" rx="5.1" ry="3.2" fill="#40332C"/><ellipse cx="732.3" cy="682.1" rx="6.7" ry="3.7" fill="#2E2420" transform="rotate(15 732.3 682.1)"/><ellipse cx="960.5" cy="683.2" rx="5.5" ry="3.4" fill="#2E2420"/><ellipse cx="893.0" cy="682.3" rx="4.8" ry="3.7" fill="#40332C" transform="rotate(15 893.0 682.3)"/><ellipse cx="575.9" cy="682.4" rx="7.2" ry="4.8" fill="#886E5C" transform="rotate(2 575.9 682.4)"/><ellipse cx="854.3" cy="682.4" rx="6.3" ry="3.4" fill="#886E5C" transform="rotate(-16 854.3 682.4)"/><ellipse cx="883.8" cy="682.8" rx="5.4" ry="3.6" fill="#372B25" transform="rotate(16 883.8 682.8)"/><ellipse cx="771.9" cy="682.8" rx="7.1" ry="5.0" fill="#483A31" transform="rotate(21 771.9 682.8)"/><ellipse cx="505.8" cy="682.8" rx="7.8" ry="3.8" fill="#261E1B" transform="rotate(3 505.8 682.8)"/><ellipse cx="775.8" cy="682.9" rx="8.8" ry="4.2" fill="#A68E78" transform="rotate(8 775.8 682.9)"/><ellipse cx="849.6" cy="682.9" rx="9.4" ry="5.3" fill="#DDA468" transform="rotate(-23 849.6 682.9)"/><ellipse cx="606.5" cy="683.0" rx="6.5" ry="3.4" fill="#C9B6A2" transform="rotate(3 606.5 683.0)"/><ellipse cx="872.0" cy="683.1" rx="12.0" ry="5.3" fill="#685446" transform="rotate(6 872.0 683.1)"/><ellipse cx="768.7" cy="683.2" rx="8.7" ry="4.8" fill="#7C6454" transform="rotate(7 768.7 683.2)"/><ellipse cx="900.4" cy="684.0" rx="4.4" ry="2.7" fill="#372B25"/><ellipse cx="569.5" cy="683.2" rx="7.5" ry="3.9" fill="#B49A80" transform="rotate(-1 569.5 683.2)"/><ellipse cx="674.2" cy="683.3" rx="5.0" ry="3.3" fill="#2A211D" transform="rotate(-13 674.2 683.3)"/><ellipse cx="953.6" cy="684.7" rx="4.0" ry="2.5" fill="#7C6454"/><ellipse cx="866.7" cy="683.3" rx="10.7" ry="5.0" fill="#261E1B" transform="rotate(2 866.7 683.3)"/><ellipse cx="538.1" cy="683.4" rx="10.0" ry="6.6" fill="#5A4A42" transform="rotate(6 538.1 683.4)"/><ellipse cx="959.4" cy="683.5" rx="2.8" ry="2.4" fill="#372B25" transform="rotate(11 959.4 683.5)"/><ellipse cx="743.5" cy="683.6" rx="8.9" ry="5.3" fill="#685446" transform="rotate(22 743.5 683.6)"/><ellipse cx="757.3" cy="683.6" rx="7.0" ry="5.9" fill="#886E5C" transform="rotate(-23 757.3 683.6)"/><ellipse cx="618.3" cy="683.7" rx="5.9" ry="3.4" fill="#261E1B" transform="rotate(0 618.3 683.7)"/><ellipse cx="950.4" cy="683.4" rx="3.4" ry="2.1" fill="#2E2420"/><ellipse cx="882.4" cy="683.9" rx="7.2" ry="3.0" fill="#2E2420" transform="rotate(19 882.4 683.9)"/><ellipse cx="899.2" cy="684.0" rx="3.3" ry="2.1" fill="#2E2420" transform="rotate(-21 899.2 684.0)"/><ellipse cx="949.1" cy="685.3" rx="6.0" ry="3.7" fill="#2E2420"/><ellipse cx="898.3" cy="684.0" rx="4.6" ry="2.4" fill="#40332C" transform="rotate(19 898.3 684.0)"/><ellipse cx="641.2" cy="684.2" rx="7.3" ry="4.1" fill="#2E2420" transform="rotate(3 641.2 684.2)"/><ellipse cx="686.9" cy="684.3" rx="6.8" ry="4.3" fill="#7C6454" transform="rotate(-1 686.9 684.3)"/><ellipse cx="958.2" cy="684.5" rx="3.7" ry="2.1" fill="#372B25" transform="rotate(21 958.2 684.5)"/><ellipse cx="721.9" cy="684.6" rx="8.5" ry="4.5" fill="#40332C" transform="rotate(18 721.9 684.6)"/><ellipse cx="533.3" cy="684.7" rx="8.6" ry="6.5" fill="#372B25" transform="rotate(3 533.3 684.7)"/><ellipse cx="602.6" cy="685.1" rx="7.4" ry="5.7" fill="#65524A" transform="rotate(14 602.6 685.1)"/><ellipse cx="892.2" cy="685.1" rx="5.5" ry="3.5" fill="#372B25" transform="rotate(-24 892.2 685.1)"/><ellipse cx="979.2" cy="685.1" rx="4.3" ry="2.3" fill="#685446" transform="rotate(-11 979.2 685.1)"/><ellipse cx="657.7" cy="685.2" rx="9.9" ry="5.0" fill="#65524A" transform="rotate(-23 657.7 685.2)"/><ellipse cx="935.8" cy="685.6" rx="6.0" ry="3.7" fill="#261E1B"/><ellipse cx="878.8" cy="685.5" rx="8.4" ry="4.6" fill="#2A211D" transform="rotate(-17 878.8 685.5)"/><ellipse cx="874.3" cy="685.6" rx="6.9" ry="3.6" fill="#40332C" transform="rotate(14 874.3 685.6)"/><ellipse cx="787.1" cy="685.6" rx="7.8" ry="4.1" fill="#72594A" transform="rotate(9 787.1 685.6)"/><ellipse cx="876.9" cy="685.7" rx="5.9" ry="5.5" fill="#7C6454" transform="rotate(20 876.9 685.7)"/><ellipse cx="719.8" cy="685.7" rx="7.7" ry="4.6" fill="#483A31" transform="rotate(6 719.8 685.7)"/><ellipse cx="701.5" cy="685.7" rx="8.9" ry="3.7" fill="#483A31" transform="rotate(-4 701.5 685.7)"/><ellipse cx="730.2" cy="685.8" rx="10.3" ry="5.4" fill="#483A31" transform="rotate(6 730.2 685.8)"/><ellipse cx="599.8" cy="685.9" rx="7.5" ry="5.3" fill="#C9B6A2" transform="rotate(-8 599.8 685.9)"/><ellipse cx="971.1" cy="686.0" rx="7.0" ry="3.9" fill="#483A31" transform="rotate(9 971.1 686.0)"/><ellipse cx="589.7" cy="686.1" rx="7.2" ry="4.8" fill="#5A4A42" transform="rotate(3 589.7 686.1)"/><ellipse cx="560.5" cy="686.2" rx="9.3" ry="5.3" fill="#372B25" transform="rotate(18 560.5 686.2)"/><ellipse cx="897.0" cy="686.2" rx="4.5" ry="2.4" fill="#372B25" transform="rotate(12 897.0 686.2)"/><ellipse cx="568.5" cy="686.3" rx="8.4" ry="4.9" fill="#2A211D" transform="rotate(-6 568.5 686.3)"/><ellipse cx="615.9" cy="686.4" rx="9.7" ry="3.5" fill="#2A211D" transform="rotate(3 615.9 686.4)"/><ellipse cx="880.1" cy="686.5" rx="7.2" ry="4.7" fill="#372B25" transform="rotate(2 880.1 686.5)"/><ellipse cx="924.0" cy="687.8" rx="6.1" ry="3.7" fill="#372B25"/><ellipse cx="905.6" cy="686.6" rx="3.4" ry="2.6" fill="#C9B6A2" transform="rotate(3 905.6 686.6)"/><ellipse cx="898.0" cy="686.7" rx="4.5" ry="3.7" fill="#EBB070" transform="rotate(-3 898.0 686.7)"/><ellipse cx="753.3" cy="686.8" rx="6.9" ry="5.2" fill="#372B25" transform="rotate(7 753.3 686.8)"/><ellipse cx="920.1" cy="687.6" rx="5.5" ry="3.4" fill="#72594A"/><ellipse cx="587.2" cy="687.0" rx="8.2" ry="4.3" fill="#EBB070" transform="rotate(8 587.2 687.0)"/><ellipse cx="919.3" cy="686.9" rx="4.7" ry="2.9" fill="#2A211D"/><ellipse cx="890.3" cy="687.1" rx="6.6" ry="3.9" fill="#2E2420" transform="rotate(22 890.3 687.1)"/><ellipse cx="918.1" cy="687.6" rx="3.7" ry="2.3" fill="#65524A"/><ellipse cx="966.0" cy="687.3" rx="4.6" ry="3.7" fill="#2A211D" transform="rotate(-23 966.0 687.3)"/><ellipse cx="979.9" cy="687.4" rx="6.9" ry="3.3" fill="#EBB070" transform="rotate(-20 979.9 687.4)"/><ellipse cx="929.6" cy="687.7" rx="6.2" ry="3.6" fill="#40332C" transform="rotate(23 929.6 687.7)"/><ellipse cx="729.1" cy="687.8" rx="11.5" ry="5.6" fill="#685446" transform="rotate(16 729.1 687.8)"/><ellipse cx="678.0" cy="687.9" rx="10.6" ry="6.8" fill="#685446" transform="rotate(-18 678.0 687.9)"/><ellipse cx="749.2" cy="688.0" rx="7.7" ry="5.3" fill="#5A4A42" transform="rotate(-1 749.2 688.0)"/><ellipse cx="620.3" cy="688.2" rx="6.3" ry="4.2" fill="#372B25" transform="rotate(4 620.3 688.2)"/><ellipse cx="887.6" cy="688.2" rx="6.3" ry="5.2" fill="#7C6454" transform="rotate(3 887.6 688.2)"/><ellipse cx="921.7" cy="688.4" rx="5.6" ry="2.8" fill="#72594A" transform="rotate(19 921.7 688.4)"/><ellipse cx="748.8" cy="688.5" rx="10.7" ry="4.5" fill="#372B25" transform="rotate(-14 748.8 688.5)"/><ellipse cx="925.6" cy="688.6" rx="4.0" ry="3.2" fill="#2E2420" transform="rotate(-17 925.6 688.6)"/><ellipse cx="649.1" cy="688.6" rx="7.3" ry="5.2" fill="#2E2420" transform="rotate(13 649.1 688.6)"/><ellipse cx="936.1" cy="688.7" rx="7.3" ry="3.6" fill="#2A211D" transform="rotate(3 936.1 688.7)"/><ellipse cx="933.7" cy="688.7" rx="6.3" ry="4.8" fill="#7C6454" transform="rotate(-14 933.7 688.7)"/><ellipse cx="900.7" cy="688.8" rx="6.6" ry="4.1" fill="#886E5C" transform="rotate(-2 900.7 688.8)"/><ellipse cx="945.7" cy="688.8" rx="7.3" ry="4.7" fill="#2A211D" transform="rotate(5 945.7 688.8)"/><ellipse cx="643.2" cy="688.8" rx="7.2" ry="3.6" fill="#AEA092" transform="rotate(-15 643.2 688.8)"/><ellipse cx="970.1" cy="688.9" rx="7.2" ry="4.0" fill="#372B25" transform="rotate(-13 970.1 688.9)"/><ellipse cx="977.7" cy="689.0" rx="7.3" ry="3.5" fill="#2E2420" transform="rotate(22 977.7 689.0)"/><ellipse cx="673.6" cy="689.1" rx="7.5" ry="5.3" fill="#2A211D" transform="rotate(22 673.6 689.1)"/><ellipse cx="931.3" cy="689.2" rx="6.3" ry="2.4" fill="#DDA468" transform="rotate(-11 931.3 689.2)"/><ellipse cx="731.2" cy="689.2" rx="9.5" ry="6.0" fill="#261E1B" transform="rotate(-7 731.2 689.2)"/><ellipse cx="959.4" cy="689.3" rx="7.3" ry="4.0" fill="#483A31" transform="rotate(19 959.4 689.3)"/><ellipse cx="726.4" cy="689.8" rx="8.2" ry="4.9" fill="#7C6454" transform="rotate(-13 726.4 689.8)"/><ellipse cx="894.5" cy="690.4" rx="8.7" ry="4.8" fill="#886E5C" transform="rotate(5 894.5 690.4)"/><ellipse cx="911.3" cy="690.5" rx="7.6" ry="3.6" fill="#261E1B" transform="rotate(-4 911.3 690.5)"/><ellipse cx="910.7" cy="690.6" rx="4.9" ry="4.2" fill="#483A31" transform="rotate(-7 910.7 690.6)"/><ellipse cx="929.8" cy="690.6" rx="7.1" ry="3.4" fill="#2E2420" transform="rotate(-4 929.8 690.6)"/><ellipse cx="970.1" cy="691.0" rx="8.4" ry="4.6" fill="#685446" transform="rotate(23 970.1 691.0)"/><ellipse cx="895.1" cy="691.4" rx="9.1" ry="4.5" fill="#261E1B" transform="rotate(-24 895.1 691.4)"/><ellipse cx="956.3" cy="691.5" rx="8.7" ry="4.4" fill="#886E5C" transform="rotate(18 956.3 691.5)"/><ellipse cx="951.4" cy="691.6" rx="6.7" ry="3.0" fill="#C0A68A" transform="rotate(-4 951.4 691.6)"/><ellipse cx="893.5" cy="692.0" rx="9.1" ry="4.6" fill="#2E2420" transform="rotate(13 893.5 692.0)"/><ellipse cx="969.4" cy="693.4" rx="7.6" ry="5.8" fill="#2A211D" transform="rotate(-25 969.4 693.4)"/><ellipse cx="971.3" cy="693.9" rx="9.1" ry="4.1" fill="#2A211D" transform="rotate(-24 971.3 693.9)"/><ellipse cx="948.1" cy="694.1" rx="9.6" ry="6.3" fill="#2A211D" transform="rotate(1 948.1 694.1)"/><ellipse cx="963.5" cy="694.3" rx="11.1" ry="5.2" fill="#72594A" transform="rotate(1 963.5 694.3)"/><ellipse cx="912.2" cy="694.4" rx="8.8" ry="5.0" fill="#2E2420" transform="rotate(7 912.2 694.4)"/><ellipse cx="926.3" cy="694.5" rx="5.9" ry="4.4" fill="#72594A" transform="rotate(-3 926.3 694.5)"/><ellipse cx="929.1" cy="694.6" rx="10.6" ry="5.4" fill="#2E2420" transform="rotate(1 929.1 694.6)"/><ellipse cx="919.6" cy="694.8" rx="6.4" ry="3.5" fill="#483A31" transform="rotate(5 919.6 694.8)"/><ellipse cx="946.3" cy="695.8" rx="7.2" ry="4.9" fill="#483A31" transform="rotate(-20 946.3 695.8)"/><ellipse cx="908.9" cy="696.0" rx="6.3" ry="4.8" fill="#5A4A42" transform="rotate(-7 908.9 696.0)"/><ellipse cx="922.1" cy="696.1" rx="10.0" ry="4.5" fill="#40332C" transform="rotate(-12 922.1 696.1)"/><ellipse cx="929.0" cy="696.6" rx="9.3" ry="3.6" fill="#483A31" transform="rotate(-9 929.0 696.6)"/><ellipse cx="914.8" cy="697.2" rx="8.5" ry="3.6" fill="#7C6454" transform="rotate(-9 914.8 697.2)"/><ellipse cx="911.8" cy="697.6" rx="10.4" ry="6.3" fill="#65524A" transform="rotate(23 911.8 697.6)"/></g>
<g filter="url(#blur3)"><ellipse cx="220.4" cy="666.0" rx="8.0" ry="4.4" fill="#5A4A42" transform="rotate(-22 220.4 666.0)"/><ellipse cx="149.9" cy="670.2" rx="9.5" ry="3.7" fill="#372B25" transform="rotate(5 149.9 670.2)"/><ellipse cx="83.2" cy="670.5" rx="8.3" ry="4.7" fill="#40332C" transform="rotate(-9 83.2 670.5)"/><ellipse cx="191.6" cy="670.9" rx="11.5" ry="5.7" fill="#886E5C" transform="rotate(-9 191.6 670.9)"/><ellipse cx="218.0" cy="671.8" rx="12.2" ry="6.6" fill="#2E2420" transform="rotate(14 218.0 671.8)"/><ellipse cx="103.8" cy="672.0" rx="8.6" ry="3.8" fill="#372B25" transform="rotate(6 103.8 672.0)"/><ellipse cx="157.3" cy="672.6" rx="10.0" ry="6.3" fill="#685446" transform="rotate(-13 157.3 672.6)"/><ellipse cx="220.9" cy="672.7" rx="7.5" ry="5.5" fill="#40332C" transform="rotate(9 220.9 672.7)"/><ellipse cx="107.0" cy="672.7" rx="9.1" ry="5.3" fill="#483A31" transform="rotate(-17 107.0 672.7)"/><ellipse cx="156.4" cy="672.8" rx="7.0" ry="5.8" fill="#2E2420" transform="rotate(2 156.4 672.8)"/><ellipse cx="256.5" cy="673.8" rx="6.9" ry="3.6" fill="#72594A" transform="rotate(-18 256.5 673.8)"/><ellipse cx="235.8" cy="673.9" rx="8.5" ry="5.1" fill="#2E2420" transform="rotate(3 235.8 673.9)"/><ellipse cx="234.0" cy="674.1" rx="7.6" ry="6.8" fill="#C0A68A" transform="rotate(-15 234.0 674.1)"/><ellipse cx="291.9" cy="674.6" rx="10.4" ry="3.7" fill="#AEA092" transform="rotate(-10 291.9 674.6)"/><ellipse cx="303.9" cy="675.3" rx="11.3" ry="7.7" fill="#886E5C" transform="rotate(10 303.9 675.3)"/><ellipse cx="156.8" cy="675.9" rx="11.0" ry="6.0" fill="#261E1B" transform="rotate(-0 156.8 675.9)"/><ellipse cx="195.6" cy="675.9" rx="8.0" ry="6.0" fill="#372B25" transform="rotate(-21 195.6 675.9)"/><ellipse cx="346.8" cy="676.3" rx="10.5" ry="5.3" fill="#2A211D" transform="rotate(-18 346.8 676.3)"/><ellipse cx="209.5" cy="676.4" rx="13.8" ry="8.1" fill="#2A211D" transform="rotate(20 209.5 676.4)"/><ellipse cx="181.8" cy="676.5" rx="9.2" ry="6.8" fill="#7C6454" transform="rotate(-17 181.8 676.5)"/><ellipse cx="74.2" cy="676.6" rx="8.0" ry="5.6" fill="#372B25" transform="rotate(-23 74.2 676.6)"/><ellipse cx="359.0" cy="676.7" rx="10.6" ry="7.0" fill="#40332C" transform="rotate(24 359.0 676.7)"/><ellipse cx="151.9" cy="676.8" rx="10.1" ry="5.7" fill="#40332C" transform="rotate(18 151.9 676.8)"/><ellipse cx="112.0" cy="677.3" rx="9.0" ry="4.4" fill="#886E5C" transform="rotate(-14 112.0 677.3)"/><ellipse cx="142.0" cy="677.3" rx="11.1" ry="7.2" fill="#372B25" transform="rotate(-13 142.0 677.3)"/><ellipse cx="406.4" cy="677.5" rx="10.6" ry="5.7" fill="#72594A" transform="rotate(21 406.4 677.5)"/><ellipse cx="107.3" cy="677.8" rx="9.2" ry="5.0" fill="#72594A" transform="rotate(-8 107.3 677.8)"/><ellipse cx="227.9" cy="678.0" rx="14.0" ry="6.5" fill="#2A211D" transform="rotate(-21 227.9 678.0)"/><ellipse cx="388.9" cy="678.2" rx="10.4" ry="5.8" fill="#5A4A42" transform="rotate(7 388.9 678.2)"/><ellipse cx="372.8" cy="679.2" rx="13.5" ry="7.1" fill="#2E2420" transform="rotate(4 372.8 679.2)"/><ellipse cx="258.6" cy="679.3" rx="10.5" ry="6.9" fill="#372B25" transform="rotate(-18 258.6 679.3)"/><ellipse cx="165.0" cy="679.3" rx="10.4" ry="6.3" fill="#BCA288" transform="rotate(16 165.0 679.3)"/><ellipse cx="445.5" cy="679.5" rx="10.4" ry="4.4" fill="#40332C" transform="rotate(-23 445.5 679.5)"/><ellipse cx="185.5" cy="679.6" rx="11.0" ry="5.8" fill="#BCA288" transform="rotate(16 185.5 679.6)"/><ellipse cx="355.0" cy="680.2" rx="7.9" ry="5.7" fill="#2E2420" transform="rotate(-17 355.0 680.2)"/><ellipse cx="322.8" cy="680.3" rx="11.6" ry="4.6" fill="#EBB070" transform="rotate(-7 322.8 680.3)"/><ellipse cx="118.3" cy="680.8" rx="12.4" ry="6.3" fill="#886E5C" transform="rotate(16 118.3 680.8)"/><ellipse cx="120.9" cy="681.2" rx="9.7" ry="8.0" fill="#372B25" transform="rotate(11 120.9 681.2)"/><ellipse cx="227.9" cy="681.4" rx="14.8" ry="7.9" fill="#EBB070" transform="rotate(13 227.9 681.4)"/><ellipse cx="469.8" cy="681.6" rx="11.3" ry="5.6" fill="#7C6454" transform="rotate(-7 469.8 681.6)"/><ellipse cx="219.9" cy="682.2" rx="8.4" ry="6.8" fill="#BCA288" transform="rotate(2 219.9 682.2)"/><ellipse cx="227.1" cy="682.2" rx="9.8" ry="8.3" fill="#5A4A42" transform="rotate(15 227.1 682.2)"/><ellipse cx="415.0" cy="682.5" rx="10.4" ry="5.1" fill="#2E2420" transform="rotate(13 415.0 682.5)"/><ellipse cx="83.7" cy="682.5" rx="13.9" ry="7.2" fill="#65524A" transform="rotate(5 83.7 682.5)"/><ellipse cx="341.0" cy="682.9" rx="13.1" ry="6.9" fill="#5A4A42" transform="rotate(8 341.0 682.9)"/><ellipse cx="64.9" cy="683.0" rx="9.7" ry="8.2" fill="#AEA092" transform="rotate(-4 64.9 683.0)"/><ellipse cx="386.2" cy="683.2" rx="12.7" ry="5.6" fill="#2E2420" transform="rotate(-23 386.2 683.2)"/><ellipse cx="441.3" cy="683.3" rx="12.9" ry="6.6" fill="#372B25" transform="rotate(7 441.3 683.3)"/><ellipse cx="376.9" cy="683.4" rx="9.1" ry="4.7" fill="#886E5C" transform="rotate(-11 376.9 683.4)"/><ellipse cx="229.4" cy="683.5" rx="13.1" ry="6.8" fill="#261E1B" transform="rotate(-23 229.4 683.5)"/><ellipse cx="194.8" cy="683.7" rx="11.7" ry="6.1" fill="#7C6454" transform="rotate(-24 194.8 683.7)"/><ellipse cx="149.3" cy="683.8" rx="11.2" ry="7.3" fill="#EBB070" transform="rotate(2 149.3 683.8)"/><ellipse cx="166.9" cy="683.9" rx="9.2" ry="4.9" fill="#261E1B" transform="rotate(9 166.9 683.9)"/><ellipse cx="367.0" cy="684.3" rx="7.7" ry="5.3" fill="#685446" transform="rotate(21 367.0 684.3)"/><ellipse cx="65.1" cy="684.3" rx="9.1" ry="7.5" fill="#7C6454" transform="rotate(-19 65.1 684.3)"/><ellipse cx="854.9" cy="684.3" rx="8.2" ry="5.6" fill="#261E1B" transform="rotate(4 854.9 684.3)"/><ellipse cx="200.3" cy="684.4" rx="14.3" ry="8.4" fill="#2E2420" transform="rotate(6 200.3 684.4)"/><ellipse cx="300.2" cy="684.8" rx="11.9" ry="8.2" fill="#886E5C" transform="rotate(23 300.2 684.8)"/><ellipse cx="422.2" cy="685.0" rx="8.4" ry="6.3" fill="#2A211D" transform="rotate(-18 422.2 685.0)"/><ellipse cx="498.9" cy="685.2" rx="13.4" ry="6.3" fill="#72594A" transform="rotate(-14 498.9 685.2)"/><ellipse cx="815.2" cy="685.3" rx="7.5" ry="5.5" fill="#40332C" transform="rotate(-2 815.2 685.3)"/><ellipse cx="850.1" cy="685.9" rx="9.7" ry="4.0" fill="#372B25" transform="rotate(21 850.1 685.9)"/><ellipse cx="393.2" cy="685.9" rx="10.9" ry="4.6" fill="#483A31" transform="rotate(-9 393.2 685.9)"/><ellipse cx="83.2" cy="686.2" rx="16.3" ry="8.0" fill="#372B25" transform="rotate(18 83.2 686.2)"/><ellipse cx="176.3" cy="686.2" rx="13.6" ry="4.6" fill="#5A4A42" transform="rotate(23 176.3 686.2)"/><ellipse cx="787.5" cy="686.3" rx="7.1" ry="4.1" fill="#5A4A42" transform="rotate(-7 787.5 686.3)"/><ellipse cx="537.1" cy="686.3" rx="9.1" ry="6.2" fill="#2E2420" transform="rotate(11 537.1 686.3)"/><ellipse cx="816.4" cy="686.5" rx="11.4" ry="6.3" fill="#261E1B" transform="rotate(-11 816.4 686.5)"/><ellipse cx="407.9" cy="686.5" rx="8.0" ry="5.9" fill="#40332C" transform="rotate(-25 407.9 686.5)"/><ellipse cx="416.5" cy="686.6" rx="8.1" ry="6.8" fill="#5A4A42" transform="rotate(-18 416.5 686.6)"/><ellipse cx="557.1" cy="686.6" rx="9.1" ry="6.8" fill="#72594A" transform="rotate(-21 557.1 686.6)"/><ellipse cx="396.5" cy="686.6" rx="11.2" ry="7.5" fill="#7C6454" transform="rotate(-20 396.5 686.6)"/><ellipse cx="62.7" cy="686.7" rx="9.7" ry="5.1" fill="#483A31" transform="rotate(17 62.7 686.7)"/><ellipse cx="299.5" cy="687.1" rx="13.2" ry="5.4" fill="#2E2420" transform="rotate(11 299.5 687.1)"/><ellipse cx="330.9" cy="687.2" rx="12.3" ry="9.0" fill="#372B25" transform="rotate(24 330.9 687.2)"/><ellipse cx="824.3" cy="687.3" rx="10.2" ry="5.1" fill="#685446" transform="rotate(-25 824.3 687.3)"/><ellipse cx="354.3" cy="687.5" rx="8.1" ry="5.2" fill="#685446" transform="rotate(8 354.3 687.5)"/><ellipse cx="569.7" cy="687.7" rx="7.1" ry="5.2" fill="#261E1B" transform="rotate(16 569.7 687.7)"/><ellipse cx="857.1" cy="687.8" rx="9.0" ry="4.7" fill="#BCA288" transform="rotate(6 857.1 687.8)"/><ellipse cx="448.2" cy="687.9" rx="13.1" ry="4.6" fill="#483A31" transform="rotate(17 448.2 687.9)"/><ellipse cx="292.2" cy="688.0" rx="11.5" ry="7.1" fill="#483A31" transform="rotate(-22 292.2 688.0)"/><ellipse cx="556.1" cy="688.1" rx="8.4" ry="5.7" fill="#40332C" transform="rotate(-19 556.1 688.1)"/><ellipse cx="316.9" cy="688.3" rx="10.2" ry="6.3" fill="#72594A" transform="rotate(-1 316.9 688.3)"/><ellipse cx="117.9" cy="688.4" rx="11.4" ry="5.5" fill="#372B25" transform="rotate(20 117.9 688.4)"/><ellipse cx="407.0" cy="688.4" rx="8.4" ry="7.6" fill="#2A211D" transform="rotate(-5 407.0 688.4)"/><ellipse cx="513.3" cy="688.4" rx="8.4" ry="4.8" fill="#72594A" transform="rotate(0 513.3 688.4)"/><ellipse cx="170.5" cy="688.5" rx="12.4" ry="5.2" fill="#40332C" transform="rotate(-12 170.5 688.5)"/><ellipse cx="510.9" cy="688.5" rx="11.4" ry="7.9" fill="#2E2420" transform="rotate(24 510.9 688.5)"/><ellipse cx="504.4" cy="688.7" rx="10.0" ry="3.9" fill="#BCA288" transform="rotate(-14 504.4 688.7)"/><ellipse cx="358.0" cy="688.8" rx="10.5" ry="4.7" fill="#72594A" transform="rotate(-14 358.0 688.8)"/><ellipse cx="793.4" cy="688.8" rx="9.9" ry="5.4" fill="#AEA092" transform="rotate(18 793.4 688.8)"/><ellipse cx="622.7" cy="689.0" rx="7.8" ry="5.6" fill="#372B25" transform="rotate(2 622.7 689.0)"/><ellipse cx="97.7" cy="689.0" rx="13.1" ry="7.1" fill="#261E1B" transform="rotate(11 97.7 689.0)"/><ellipse cx="762.9" cy="689.1" rx="9.3" ry="6.1" fill="#B49A80" transform="rotate(-1 762.9 689.1)"/><ellipse cx="509.8" cy="689.2" rx="10.0" ry="5.9" fill="#65524A" transform="rotate(-5 509.8 689.2)"/><ellipse cx="507.9" cy="689.2" rx="9.6" ry="6.9" fill="#C9B6A2" transform="rotate(14 507.9 689.2)"/><ellipse cx="747.1" cy="689.3" rx="11.5" ry="4.6" fill="#2A211D" transform="rotate(22 747.1 689.3)"/><ellipse cx="376.0" cy="689.5" rx="8.7" ry="6.4" fill="#372B25" transform="rotate(21 376.0 689.5)"/><ellipse cx="634.5" cy="689.6" rx="8.1" ry="4.2" fill="#2E2420" transform="rotate(-2 634.5 689.6)"/><ellipse cx="205.6" cy="689.6" rx="9.0" ry="6.7" fill="#AEA092" transform="rotate(25 205.6 689.6)"/><ellipse cx="609.3" cy="689.8" rx="9.7" ry="6.2" fill="#40332C" transform="rotate(-3 609.3 689.8)"/><ellipse cx="734.0" cy="690.0" rx="6.0" ry="3.4" fill="#372B25" transform="rotate(-4 734.0 690.0)"/><ellipse cx="330.7" cy="690.1" rx="12.4" ry="5.3" fill="#372B25" transform="rotate(13 330.7 690.1)"/><ellipse cx="611.2" cy="690.2" rx="10.6" ry="5.2" fill="#5A4A42" transform="rotate(-12 611.2 690.2)"/><ellipse cx="767.3" cy="690.2" rx="11.1" ry="3.8" fill="#483A31" transform="rotate(8 767.3 690.2)"/><ellipse cx="360.1" cy="690.3" rx="10.8" ry="6.2" fill="#65524A" transform="rotate(-15 360.1 690.3)"/><ellipse cx="389.7" cy="690.3" rx="10.4" ry="6.1" fill="#685446" transform="rotate(-8 389.7 690.3)"/><ellipse cx="372.0" cy="690.5" rx="12.1" ry="4.5" fill="#72594A" transform="rotate(-16 372.0 690.5)"/><ellipse cx="686.3" cy="690.5" rx="12.6" ry="4.6" fill="#72594A" transform="rotate(-16 686.3 690.5)"/><ellipse cx="317.8" cy="690.7" rx="8.9" ry="5.9" fill="#B49A80" transform="rotate(8 317.8 690.7)"/><ellipse cx="494.0" cy="691.0" rx="9.4" ry="4.8" fill="#372B25" transform="rotate(7 494.0 691.0)"/><ellipse cx="875.2" cy="691.0" rx="9.3" ry="5.5" fill="#40332C" transform="rotate(-22 875.2 691.0)"/><ellipse cx="106.5" cy="691.1" rx="9.7" ry="7.6" fill="#372B25" transform="rotate(-19 106.5 691.1)"/><ellipse cx="224.0" cy="691.1" rx="10.9" ry="6.7" fill="#AEA092" transform="rotate(19 224.0 691.1)"/><ellipse cx="220.5" cy="691.1" rx="14.7" ry="7.2" fill="#483A31" transform="rotate(11 220.5 691.1)"/><ellipse cx="311.4" cy="691.1" rx="15.6" ry="6.7" fill="#5A4A42" transform="rotate(19 311.4 691.1)"/><ellipse cx="105.6" cy="691.2" rx="15.2" ry="8.1" fill="#2A211D" transform="rotate(-23 105.6 691.2)"/><ellipse cx="677.4" cy="691.3" rx="10.2" ry="5.4" fill="#5A4A42" transform="rotate(20 677.4 691.3)"/><ellipse cx="859.0" cy="691.3" rx="9.4" ry="4.6" fill="#261E1B" transform="rotate(-19 859.0 691.3)"/><ellipse cx="636.2" cy="691.4" rx="9.3" ry="5.9" fill="#40332C" transform="rotate(15 636.2 691.4)"/><ellipse cx="587.5" cy="691.8" rx="13.4" ry="5.3" fill="#372B25" transform="rotate(21 587.5 691.8)"/><ellipse cx="369.5" cy="691.9" rx="11.9" ry="7.0" fill="#40332C" transform="rotate(-5 369.5 691.9)"/><ellipse cx="365.5" cy="691.9" rx="11.1" ry="8.6" fill="#372B25" transform="rotate(14 365.5 691.9)"/><ellipse cx="539.5" cy="691.9" rx="9.8" ry="7.3" fill="#B49A80" transform="rotate(-14 539.5 691.9)"/><ellipse cx="296.2" cy="691.9" rx="11.5" ry="7.0" fill="#372B25" transform="rotate(-9 296.2 691.9)"/><ellipse cx="131.8" cy="692.1" rx="10.1" ry="5.8" fill="#483A31" transform="rotate(10 131.8 692.1)"/><ellipse cx="675.8" cy="692.2" rx="10.3" ry="6.3" fill="#483A31" transform="rotate(11 675.8 692.2)"/><ellipse cx="833.0" cy="692.3" rx="11.6" ry="6.8" fill="#886E5C" transform="rotate(-13 833.0 692.3)"/><ellipse cx="638.5" cy="692.4" rx="11.1" ry="6.4" fill="#372B25" transform="rotate(22 638.5 692.4)"/><ellipse cx="455.5" cy="692.7" rx="8.4" ry="6.0" fill="#65524A" transform="rotate(20 455.5 692.7)"/><ellipse cx="303.1" cy="692.8" rx="10.3" ry="5.0" fill="#2A211D" transform="rotate(-19 303.1 692.8)"/><ellipse cx="102.5" cy="692.9" rx="14.5" ry="5.5" fill="#261E1B" transform="rotate(-7 102.5 692.9)"/><ellipse cx="716.9" cy="693.0" rx="8.3" ry="4.4" fill="#372B25" transform="rotate(-9 716.9 693.0)"/><ellipse cx="625.7" cy="693.1" rx="8.3" ry="5.8" fill="#2A211D" transform="rotate(-20 625.7 693.1)"/><ellipse cx="171.7" cy="693.2" rx="10.9" ry="5.5" fill="#2A211D" transform="rotate(-14 171.7 693.2)"/><ellipse cx="316.5" cy="693.2" rx="10.1" ry="6.3" fill="#40332C" transform="rotate(-13 316.5 693.2)"/><ellipse cx="559.9" cy="693.2" rx="14.7" ry="5.5" fill="#C0A68A" transform="rotate(13 559.9 693.2)"/><ellipse cx="755.8" cy="693.3" rx="11.2" ry="6.5" fill="#372B25" transform="rotate(2 755.8 693.3)"/><ellipse cx="313.0" cy="693.4" rx="12.1" ry="5.5" fill="#372B25" transform="rotate(-5 313.0 693.4)"/><ellipse cx="629.0" cy="693.5" rx="9.5" ry="6.0" fill="#DDA468" transform="rotate(-23 629.0 693.5)"/><ellipse cx="612.8" cy="693.5" rx="11.6" ry="5.3" fill="#2E2420" transform="rotate(-7 612.8 693.5)"/><ellipse cx="686.5" cy="693.6" rx="10.3" ry="7.0" fill="#5A4A42" transform="rotate(-18 686.5 693.6)"/><ellipse cx="846.3" cy="693.6" rx="13.9" ry="6.9" fill="#2A211D" transform="rotate(-6 846.3 693.6)"/><ellipse cx="437.5" cy="693.9" rx="14.6" ry="7.3" fill="#65524A" transform="rotate(8 437.5 693.9)"/><ellipse cx="326.2" cy="694.1" rx="11.2" ry="9.3" fill="#40332C" transform="rotate(-23 326.2 694.1)"/><ellipse cx="365.4" cy="694.1" rx="16.0" ry="6.8" fill="#483A31" transform="rotate(-9 365.4 694.1)"/><ellipse cx="629.9" cy="694.5" rx="13.1" ry="6.7" fill="#65524A" transform="rotate(-9 629.9 694.5)"/><ellipse cx="440.8" cy="694.7" rx="11.1" ry="7.0" fill="#261E1B" transform="rotate(2 440.8 694.7)"/><ellipse cx="974.8" cy="694.8" rx="9.1" ry="3.9" fill="#483A31" transform="rotate(22 974.8 694.8)"/><ellipse cx="147.3" cy="694.8" rx="14.5" ry="8.3" fill="#AEA092" transform="rotate(20 147.3 694.8)"/><ellipse cx="779.9" cy="694.8" rx="9.9" ry="7.0" fill="#DDA468" transform="rotate(8 779.9 694.8)"/><ellipse cx="238.2" cy="694.9" rx="16.6" ry="9.4" fill="#685446" transform="rotate(4 238.2 694.9)"/><ellipse cx="732.1" cy="694.9" rx="15.0" ry="8.2" fill="#5A4A42" transform="rotate(6 732.1 694.9)"/><ellipse cx="881.8" cy="695.0" rx="12.5" ry="7.4" fill="#372B25" transform="rotate(-12 881.8 695.0)"/><ellipse cx="310.9" cy="695.0" rx="15.2" ry="7.9" fill="#B49A80" transform="rotate(-7 310.9 695.0)"/><ellipse cx="622.8" cy="695.1" rx="10.1" ry="7.1" fill="#2A211D" transform="rotate(-4 622.8 695.1)"/><ellipse cx="674.3" cy="695.3" rx="10.4" ry="6.2" fill="#2E2420" transform="rotate(-20 674.3 695.3)"/><ellipse cx="59.7" cy="695.3" rx="15.5" ry="6.2" fill="#2E2420" transform="rotate(-4 59.7 695.3)"/><ellipse cx="831.4" cy="695.4" rx="12.7" ry="5.8" fill="#372B25" transform="rotate(4 831.4 695.4)"/><ellipse cx="589.2" cy="695.4" rx="10.8" ry="5.9" fill="#372B25" transform="rotate(16 589.2 695.4)"/><ellipse cx="653.0" cy="695.7" rx="7.7" ry="5.5" fill="#483A31" transform="rotate(-21 653.0 695.7)"/><ellipse cx="582.1" cy="695.7" rx="12.2" ry="7.0" fill="#886E5C" transform="rotate(20 582.1 695.7)"/><ellipse cx="167.7" cy="695.9" rx="12.7" ry="7.6" fill="#C0A68A" transform="rotate(17 167.7 695.9)"/><ellipse cx="380.3" cy="695.9" rx="12.5" ry="8.2" fill="#2A211D" transform="rotate(-12 380.3 695.9)"/><ellipse cx="525.3" cy="696.2" rx="12.6" ry="7.0" fill="#BCA288" transform="rotate(-13 525.3 696.2)"/><ellipse cx="877.7" cy="696.2" rx="8.7" ry="5.7" fill="#2A211D" transform="rotate(-19 877.7 696.2)"/><ellipse cx="211.2" cy="696.4" rx="11.4" ry="7.9" fill="#483A31" transform="rotate(-17 211.2 696.4)"/><ellipse cx="495.4" cy="696.4" rx="11.0" ry="6.4" fill="#65524A" transform="rotate(-21 495.4 696.4)"/><ellipse cx="699.5" cy="696.4" rx="12.2" ry="6.8" fill="#C9B6A2" transform="rotate(-0 699.5 696.4)"/><ellipse cx="251.7" cy="696.5" rx="13.6" ry="7.2" fill="#886E5C" transform="rotate(13 251.7 696.5)"/><ellipse cx="372.8" cy="696.5" rx="11.3" ry="6.7" fill="#2A211D" transform="rotate(11 372.8 696.5)"/><ellipse cx="971.0" cy="696.8" rx="8.8" ry="3.9" fill="#2A211D" transform="rotate(13 971.0 696.8)"/><ellipse cx="150.6" cy="696.9" rx="11.5" ry="7.0" fill="#72594A" transform="rotate(1 150.6 696.9)"/><ellipse cx="465.8" cy="696.9" rx="15.7" ry="7.0" fill="#C0A68A" transform="rotate(-22 465.8 696.9)"/><ellipse cx="597.5" cy="696.9" rx="14.0" ry="8.3" fill="#C98040" transform="rotate(6 597.5 696.9)"/><ellipse cx="892.2" cy="697.0" rx="9.9" ry="5.3" fill="#2A211D" transform="rotate(-15 892.2 697.0)"/><ellipse cx="450.2" cy="697.1" rx="10.8" ry="6.7" fill="#C9B6A2" transform="rotate(-11 450.2 697.1)"/><ellipse cx="850.7" cy="697.2" rx="14.4" ry="7.1" fill="#685446" transform="rotate(-10 850.7 697.2)"/><ellipse cx="249.1" cy="697.2" rx="13.9" ry="8.4" fill="#2A211D" transform="rotate(-19 249.1 697.2)"/><ellipse cx="494.0" cy="697.2" rx="13.9" ry="6.3" fill="#7C6454" transform="rotate(4 494.0 697.2)"/><ellipse cx="536.5" cy="697.5" rx="12.8" ry="5.8" fill="#40332C" transform="rotate(-6 536.5 697.5)"/><ellipse cx="548.2" cy="697.5" rx="12.7" ry="6.9" fill="#7C6454" transform="rotate(-8 548.2 697.5)"/><ellipse cx="835.5" cy="697.7" rx="9.8" ry="6.4" fill="#BCA288" transform="rotate(-14 835.5 697.7)"/><ellipse cx="818.9" cy="697.7" rx="11.1" ry="7.9" fill="#DDA468" transform="rotate(-8 818.9 697.7)"/><ellipse cx="345.0" cy="697.7" rx="10.1" ry="7.4" fill="#40332C" transform="rotate(3 345.0 697.7)"/><ellipse cx="180.7" cy="697.9" rx="9.4" ry="5.4" fill="#DDA468" transform="rotate(9 180.7 697.9)"/><ellipse cx="146.5" cy="698.0" rx="12.4" ry="8.5" fill="#7C6454" transform="rotate(-20 146.5 698.0)"/><ellipse cx="933.3" cy="698.2" rx="13.0" ry="7.0" fill="#40332C" transform="rotate(-5 933.3 698.2)"/><ellipse cx="750.5" cy="698.3" rx="9.8" ry="7.8" fill="#2E2420" transform="rotate(-20 750.5 698.3)"/><ellipse cx="972.0" cy="698.4" rx="8.2" ry="6.0" fill="#483A31" transform="rotate(-1 972.0 698.4)"/><ellipse cx="270.2" cy="698.4" rx="12.6" ry="8.7" fill="#7C6454" transform="rotate(13 270.2 698.4)"/><ellipse cx="239.9" cy="698.4" rx="13.7" ry="5.8" fill="#483A31" transform="rotate(17 239.9 698.4)"/><ellipse cx="384.2" cy="698.5" rx="9.6" ry="8.9" fill="#261E1B" transform="rotate(-4 384.2 698.5)"/><ellipse cx="879.7" cy="698.5" rx="11.6" ry="5.1" fill="#BCA288" transform="rotate(15 879.7 698.5)"/><ellipse cx="378.8" cy="698.6" rx="12.3" ry="8.4" fill="#40332C" transform="rotate(-20 378.8 698.6)"/><ellipse cx="464.1" cy="698.6" rx="13.1" ry="7.8" fill="#886E5C" transform="rotate(-14 464.1 698.6)"/><ellipse cx="635.0" cy="698.6" rx="9.1" ry="7.2" fill="#261E1B" transform="rotate(21 635.0 698.6)"/><ellipse cx="678.9" cy="698.6" rx="9.2" ry="5.7" fill="#483A31" transform="rotate(-6 678.9 698.6)"/><ellipse cx="962.5" cy="698.7" rx="12.5" ry="6.4" fill="#886E5C" transform="rotate(-3 962.5 698.7)"/><ellipse cx="931.8" cy="698.8" rx="9.3" ry="5.4" fill="#483A31" transform="rotate(3 931.8 698.8)"/><ellipse cx="664.8" cy="698.9" rx="11.8" ry="6.8" fill="#261E1B" transform="rotate(20 664.8 698.9)"/><ellipse cx="450.5" cy="698.9" rx="10.4" ry="9.1" fill="#372B25" transform="rotate(-24 450.5 698.9)"/><ellipse cx="882.7" cy="699.0" rx="10.2" ry="5.5" fill="#372B25" transform="rotate(-24 882.7 699.0)"/><ellipse cx="751.9" cy="699.0" rx="10.2" ry="6.1" fill="#372B25" transform="rotate(12 751.9 699.0)"/><ellipse cx="919.7" cy="699.1" rx="8.2" ry="6.1" fill="#886E5C" transform="rotate(19 919.7 699.1)"/><ellipse cx="690.7" cy="699.3" rx="13.9" ry="6.8" fill="#65524A" transform="rotate(-18 690.7 699.3)"/><ellipse cx="843.5" cy="699.3" rx="9.5" ry="8.1" fill="#886E5C" transform="rotate(-19 843.5 699.3)"/><ellipse cx="372.3" cy="699.5" rx="11.0" ry="7.7" fill="#C98040" transform="rotate(-9 372.3 699.5)"/><ellipse cx="927.1" cy="699.6" rx="10.2" ry="6.8" fill="#261E1B" transform="rotate(-24 927.1 699.6)"/><ellipse cx="172.3" cy="699.7" rx="10.9" ry="9.5" fill="#72594A" transform="rotate(-1 172.3 699.7)"/><ellipse cx="96.4" cy="699.7" rx="17.7" ry="7.6" fill="#685446" transform="rotate(1 96.4 699.7)"/><ellipse cx="525.6" cy="699.8" rx="11.6" ry="6.5" fill="#40332C" transform="rotate(-17 525.6 699.8)"/><ellipse cx="144.8" cy="699.8" rx="17.2" ry="9.9" fill="#72594A" transform="rotate(24 144.8 699.8)"/><ellipse cx="635.7" cy="699.9" rx="9.0" ry="6.1" fill="#261E1B" transform="rotate(-7 635.7 699.9)"/><ellipse cx="978.8" cy="699.9" rx="14.2" ry="5.9" fill="#72594A" transform="rotate(22 978.8 699.9)"/><ellipse cx="778.7" cy="699.9" rx="11.5" ry="7.0" fill="#DDA468" transform="rotate(4 778.7 699.9)"/><ellipse cx="802.9" cy="700.0" rx="10.0" ry="6.8" fill="#372B25" transform="rotate(25 802.9 700.0)"/><ellipse cx="853.5" cy="700.0" rx="13.7" ry="5.9" fill="#DDA468" transform="rotate(13 853.5 700.0)"/><ellipse cx="258.2" cy="700.4" rx="12.7" ry="8.1" fill="#261E1B" transform="rotate(-11 258.2 700.4)"/><ellipse cx="640.9" cy="700.5" rx="16.0" ry="7.1" fill="#2E2420" transform="rotate(7 640.9 700.5)"/><ellipse cx="549.8" cy="700.6" rx="9.8" ry="6.4" fill="#483A31" transform="rotate(9 549.8 700.6)"/><ellipse cx="817.0" cy="700.7" rx="11.5" ry="8.6" fill="#5A4A42" transform="rotate(9 817.0 700.7)"/><ellipse cx="130.1" cy="700.7" rx="10.0" ry="7.4" fill="#5A4A42" transform="rotate(7 130.1 700.7)"/><ellipse cx="294.1" cy="700.8" rx="15.8" ry="10.0" fill="#685446" transform="rotate(11 294.1 700.8)"/><ellipse cx="571.0" cy="700.9" rx="10.6" ry="5.2" fill="#483A31" transform="rotate(11 571.0 700.9)"/><ellipse cx="586.0" cy="700.9" rx="11.3" ry="8.9" fill="#BCA288" transform="rotate(-6 586.0 700.9)"/><ellipse cx="612.5" cy="701.0" rx="13.7" ry="6.1" fill="#483A31" transform="rotate(14 612.5 701.0)"/><ellipse cx="528.2" cy="701.1" rx="11.4" ry="6.9" fill="#2A211D" transform="rotate(17 528.2 701.1)"/><ellipse cx="917.4" cy="701.1" rx="10.8" ry="7.3" fill="#40332C" transform="rotate(-25 917.4 701.1)"/><ellipse cx="194.8" cy="701.2" rx="12.8" ry="7.5" fill="#C0A68A" transform="rotate(-5 194.8 701.2)"/><ellipse cx="150.2" cy="701.3" rx="12.0" ry="7.5" fill="#372B25" transform="rotate(23 150.2 701.3)"/><ellipse cx="687.4" cy="701.3" rx="13.7" ry="4.6" fill="#2A211D" transform="rotate(-16 687.4 701.3)"/><ellipse cx="887.7" cy="701.4" rx="11.9" ry="5.4" fill="#261E1B" transform="rotate(-0 887.7 701.4)"/><ellipse cx="505.0" cy="701.4" rx="12.2" ry="7.0" fill="#886E5C" transform="rotate(-7 505.0 701.4)"/><ellipse cx="824.2" cy="701.6" rx="13.0" ry="6.6" fill="#40332C" transform="rotate(-9 824.2 701.6)"/><ellipse cx="540.8" cy="701.6" rx="15.4" ry="7.1" fill="#AEA092" transform="rotate(20 540.8 701.6)"/><ellipse cx="407.3" cy="701.7" rx="9.3" ry="7.4" fill="#2E2420" transform="rotate(14 407.3 701.7)"/><ellipse cx="850.7" cy="701.8" rx="10.9" ry="5.7" fill="#483A31" transform="rotate(-2 850.7 701.8)"/><ellipse cx="610.1" cy="701.8" rx="13.4" ry="8.1" fill="#886E5C" transform="rotate(-21 610.1 701.8)"/><ellipse cx="658.1" cy="701.8" rx="13.3" ry="7.8" fill="#2E2420" transform="rotate(-22 658.1 701.8)"/><ellipse cx="859.1" cy="701.9" rx="13.4" ry="7.0" fill="#261E1B" transform="rotate(11 859.1 701.9)"/><ellipse cx="770.3" cy="701.9" rx="12.8" ry="6.8" fill="#372B25" transform="rotate(-17 770.3 701.9)"/><ellipse cx="324.5" cy="702.0" rx="15.9" ry="7.4" fill="#685446" transform="rotate(15 324.5 702.0)"/><ellipse cx="334.9" cy="702.1" rx="14.5" ry="5.9" fill="#886E5C" transform="rotate(-9 334.9 702.1)"/><ellipse cx="818.2" cy="702.1" rx="11.7" ry="7.7" fill="#72594A" transform="rotate(24 818.2 702.1)"/><ellipse cx="117.3" cy="702.1" rx="16.2" ry="7.1" fill="#DDA468" transform="rotate(-9 117.3 702.1)"/><ellipse cx="598.0" cy="702.2" rx="13.0" ry="6.8" fill="#5A4A42" transform="rotate(15 598.0 702.2)"/><ellipse cx="68.2" cy="702.2" rx="12.4" ry="6.4" fill="#372B25" transform="rotate(-19 68.2 702.2)"/><ellipse cx="368.4" cy="702.4" rx="12.0" ry="7.3" fill="#2E2420" transform="rotate(-22 368.4 702.4)"/><ellipse cx="810.7" cy="702.4" rx="13.9" ry="5.3" fill="#483A31" transform="rotate(10 810.7 702.4)"/><ellipse cx="976.1" cy="702.4" rx="12.2" ry="5.9" fill="#C9B6A2" transform="rotate(11 976.1 702.4)"/><ellipse cx="110.5" cy="702.4" rx="17.5" ry="9.0" fill="#7C6454" transform="rotate(-0 110.5 702.4)"/><ellipse cx="708.3" cy="702.5" rx="14.1" ry="8.8" fill="#2A211D" transform="rotate(16 708.3 702.5)"/><ellipse cx="792.2" cy="702.5" rx="17.3" ry="8.2" fill="#BCA288" transform="rotate(-21 792.2 702.5)"/><ellipse cx="637.0" cy="702.6" rx="12.4" ry="7.4" fill="#372B25" transform="rotate(-5 637.0 702.6)"/><ellipse cx="814.3" cy="702.7" rx="17.6" ry="7.1" fill="#C9B6A2" transform="rotate(-23 814.3 702.7)"/><ellipse cx="739.1" cy="702.8" rx="12.8" ry="7.8" fill="#261E1B" transform="rotate(-23 739.1 702.8)"/><ellipse cx="974.9" cy="702.8" rx="14.1" ry="6.9" fill="#685446" transform="rotate(-22 974.9 702.8)"/><ellipse cx="743.9" cy="702.9" rx="13.6" ry="8.3" fill="#2E2420" transform="rotate(4 743.9 702.9)"/><ellipse cx="327.6" cy="702.9" rx="12.8" ry="6.0" fill="#65524A" transform="rotate(-12 327.6 702.9)"/><ellipse cx="516.3" cy="703.0" rx="17.9" ry="8.9" fill="#40332C" transform="rotate(2 516.3 703.0)"/><ellipse cx="679.6" cy="703.0" rx="10.4" ry="4.9" fill="#72594A" transform="rotate(-23 679.6 703.0)"/><ellipse cx="965.9" cy="703.0" rx="10.4" ry="7.4" fill="#372B25" transform="rotate(-13 965.9 703.0)"/><ellipse cx="236.1" cy="703.2" rx="15.2" ry="5.7" fill="#2A211D" transform="rotate(22 236.1 703.2)"/><ellipse cx="157.7" cy="703.2" rx="9.7" ry="8.2" fill="#2E2420" transform="rotate(12 157.7 703.2)"/><ellipse cx="683.4" cy="703.3" rx="10.5" ry="7.6" fill="#2A211D" transform="rotate(16 683.4 703.3)"/><ellipse cx="875.2" cy="703.4" rx="12.9" ry="5.8" fill="#72594A" transform="rotate(2 875.2 703.4)"/><ellipse cx="619.4" cy="703.5" rx="15.5" ry="8.3" fill="#685446" transform="rotate(-8 619.4 703.5)"/><ellipse cx="832.3" cy="703.5" rx="11.2" ry="9.7" fill="#2E2420" transform="rotate(-0 832.3 703.5)"/><ellipse cx="224.8" cy="703.6" rx="17.3" ry="8.1" fill="#5A4A42" transform="rotate(12 224.8 703.6)"/><ellipse cx="480.7" cy="703.7" rx="9.6" ry="7.7" fill="#EBB070" transform="rotate(-17 480.7 703.7)"/><ellipse cx="600.1" cy="703.7" rx="10.1" ry="6.9" fill="#40332C" transform="rotate(2 600.1 703.7)"/><ellipse cx="911.5" cy="703.8" rx="13.9" ry="6.0" fill="#65524A" transform="rotate(10 911.5 703.8)"/><ellipse cx="418.5" cy="703.9" rx="15.4" ry="7.0" fill="#AEA092" transform="rotate(23 418.5 703.9)"/><ellipse cx="925.0" cy="704.1" rx="10.8" ry="7.3" fill="#886E5C" transform="rotate(-5 925.0 704.1)"/><ellipse cx="144.0" cy="704.1" rx="13.7" ry="7.5" fill="#EBB070" transform="rotate(-4 144.0 704.1)"/><ellipse cx="627.0" cy="704.2" rx="15.7" ry="8.3" fill="#372B25" transform="rotate(-20 627.0 704.2)"/><ellipse cx="618.1" cy="704.2" rx="16.4" ry="6.5" fill="#261E1B" transform="rotate(-5 618.1 704.2)"/><ellipse cx="934.7" cy="704.2" rx="10.5" ry="7.5" fill="#372B25" transform="rotate(8 934.7 704.2)"/><ellipse cx="429.8" cy="704.2" rx="11.6" ry="5.9" fill="#483A31" transform="rotate(13 429.8 704.2)"/><ellipse cx="743.1" cy="704.2" rx="16.1" ry="8.9" fill="#2E2420" transform="rotate(11 743.1 704.2)"/><ellipse cx="617.8" cy="704.2" rx="13.5" ry="7.7" fill="#2E2420" transform="rotate(21 617.8 704.2)"/><ellipse cx="962.9" cy="704.5" rx="9.7" ry="8.7" fill="#40332C" transform="rotate(2 962.9 704.5)"/><ellipse cx="470.7" cy="704.5" rx="13.8" ry="8.5" fill="#685446" transform="rotate(13 470.7 704.5)"/><ellipse cx="807.8" cy="704.5" rx="17.5" ry="8.0" fill="#685446" transform="rotate(2 807.8 704.5)"/><ellipse cx="229.5" cy="704.6" rx="14.0" ry="7.5" fill="#372B25" transform="rotate(-6 229.5 704.6)"/><ellipse cx="316.1" cy="704.6" rx="13.2" ry="5.4" fill="#372B25" transform="rotate(-21 316.1 704.6)"/><ellipse cx="622.1" cy="704.7" rx="11.4" ry="7.6" fill="#40332C" transform="rotate(-20 622.1 704.7)"/><ellipse cx="121.4" cy="704.7" rx="12.0" ry="7.5" fill="#65524A" transform="rotate(22 121.4 704.7)"/><ellipse cx="653.3" cy="704.7" rx="15.2" ry="6.5" fill="#72594A" transform="rotate(13 653.3 704.7)"/><ellipse cx="695.4" cy="704.7" rx="15.5" ry="5.8" fill="#65524A" transform="rotate(21 695.4 704.7)"/><ellipse cx="432.6" cy="704.8" rx="13.0" ry="6.6" fill="#2E2420" transform="rotate(19 432.6 704.8)"/><ellipse cx="135.8" cy="704.8" rx="16.5" ry="7.4" fill="#DDA468" transform="rotate(22 135.8 704.8)"/><ellipse cx="868.7" cy="704.8" rx="12.2" ry="6.7" fill="#483A31" transform="rotate(5 868.7 704.8)"/><ellipse cx="926.1" cy="704.8" rx="11.9" ry="9.2" fill="#372B25" transform="rotate(-7 926.1 704.8)"/><ellipse cx="284.7" cy="704.9" rx="15.0" ry="8.0" fill="#261E1B" transform="rotate(-2 284.7 704.9)"/><ellipse cx="961.3" cy="704.9" rx="15.0" ry="5.8" fill="#2E2420" transform="rotate(8 961.3 704.9)"/><ellipse cx="477.7" cy="704.9" rx="10.9" ry="8.9" fill="#2E2420" transform="rotate(9 477.7 704.9)"/><ellipse cx="962.6" cy="705.0" rx="14.5" ry="6.4" fill="#65524A" transform="rotate(11 962.6 705.0)"/><ellipse cx="532.8" cy="705.0" rx="12.4" ry="7.3" fill="#483A31" transform="rotate(18 532.8 705.0)"/><ellipse cx="540.6" cy="705.2" rx="11.6" ry="6.2" fill="#72594A" transform="rotate(18 540.6 705.2)"/><ellipse cx="82.8" cy="705.2" rx="13.2" ry="9.2" fill="#65524A" transform="rotate(-2 82.8 705.2)"/><ellipse cx="748.9" cy="705.3" rx="10.7" ry="5.5" fill="#5A4A42" transform="rotate(12 748.9 705.3)"/><ellipse cx="640.7" cy="705.5" rx="16.2" ry="7.8" fill="#C0A68A" transform="rotate(10 640.7 705.5)"/><ellipse cx="672.8" cy="705.7" rx="10.8" ry="10.0" fill="#40332C" transform="rotate(17 672.8 705.7)"/><ellipse cx="479.4" cy="705.9" rx="13.4" ry="8.9" fill="#2A211D" transform="rotate(-7 479.4 705.9)"/><ellipse cx="507.8" cy="706.1" rx="11.1" ry="7.2" fill="#372B25" transform="rotate(-14 507.8 706.1)"/><ellipse cx="671.7" cy="706.2" rx="15.4" ry="8.4" fill="#483A31" transform="rotate(5 671.7 706.2)"/><ellipse cx="167.9" cy="706.3" rx="17.8" ry="9.4" fill="#483A31" transform="rotate(13 167.9 706.3)"/><ellipse cx="722.5" cy="706.3" rx="11.8" ry="7.1" fill="#C0A68A" transform="rotate(-6 722.5 706.3)"/><ellipse cx="229.1" cy="706.3" rx="14.6" ry="6.8" fill="#40332C" transform="rotate(-7 229.1 706.3)"/><ellipse cx="862.6" cy="706.3" rx="11.0" ry="8.2" fill="#886E5C" transform="rotate(15 862.6 706.3)"/><ellipse cx="269.5" cy="706.4" rx="17.2" ry="9.3" fill="#40332C" transform="rotate(-16 269.5 706.4)"/><ellipse cx="235.9" cy="706.6" rx="16.2" ry="7.0" fill="#886E5C" transform="rotate(-21 235.9 706.6)"/><ellipse cx="420.0" cy="706.7" rx="18.0" ry="10.3" fill="#886E5C" transform="rotate(-1 420.0 706.7)"/><ellipse cx="136.9" cy="706.8" rx="16.3" ry="8.6" fill="#40332C" transform="rotate(15 136.9 706.8)"/><ellipse cx="664.2" cy="707.2" rx="13.2" ry="7.8" fill="#40332C" transform="rotate(16 664.2 707.2)"/><ellipse cx="650.3" cy="707.2" rx="15.7" ry="7.6" fill="#372B25" transform="rotate(-17 650.3 707.2)"/><ellipse cx="965.5" cy="707.3" rx="11.9" ry="8.6" fill="#B49A80" transform="rotate(20 965.5 707.3)"/><ellipse cx="220.2" cy="707.3" rx="11.3" ry="9.9" fill="#483A31" transform="rotate(-10 220.2 707.3)"/><ellipse cx="427.0" cy="707.8" rx="10.6" ry="6.0" fill="#372B25" transform="rotate(24 427.0 707.8)"/><ellipse cx="645.6" cy="708.0" rx="15.2" ry="7.8" fill="#886E5C" transform="rotate(-7 645.6 708.0)"/><ellipse cx="922.0" cy="708.1" rx="10.9" ry="6.5" fill="#7C6454" transform="rotate(-12 922.0 708.1)"/><ellipse cx="790.1" cy="708.1" rx="16.8" ry="9.4" fill="#483A31" transform="rotate(-2 790.1 708.1)"/><ellipse cx="947.3" cy="708.1" rx="12.8" ry="9.3" fill="#685446" transform="rotate(-1 947.3 708.1)"/><ellipse cx="304.6" cy="708.1" rx="12.7" ry="10.2" fill="#685446" transform="rotate(14 304.6 708.1)"/><ellipse cx="568.3" cy="708.2" rx="12.4" ry="6.2" fill="#483A31" transform="rotate(-2 568.3 708.2)"/><ellipse cx="413.9" cy="708.2" rx="17.6" ry="9.8" fill="#886E5C" transform="rotate(4 413.9 708.2)"/><ellipse cx="629.1" cy="708.3" rx="11.8" ry="7.3" fill="#BCA288" transform="rotate(-8 629.1 708.3)"/><ellipse cx="577.3" cy="708.3" rx="15.1" ry="7.0" fill="#685446" transform="rotate(12 577.3 708.3)"/><ellipse cx="61.8" cy="708.4" rx="18.7" ry="10.5" fill="#7C6454" transform="rotate(-12 61.8 708.4)"/><ellipse cx="925.3" cy="708.4" rx="13.3" ry="5.2" fill="#7C6454" transform="rotate(-9 925.3 708.4)"/><ellipse cx="887.8" cy="708.5" rx="17.1" ry="7.5" fill="#40332C" transform="rotate(-24 887.8 708.5)"/><ellipse cx="633.8" cy="708.7" rx="11.9" ry="7.4" fill="#483A31" transform="rotate(-14 633.8 708.7)"/><ellipse cx="107.4" cy="708.8" rx="16.0" ry="7.1" fill="#2E2420" transform="rotate(-3 107.4 708.8)"/><ellipse cx="814.8" cy="708.8" rx="12.0" ry="10.4" fill="#72594A" transform="rotate(11 814.8 708.8)"/><ellipse cx="135.8" cy="708.8" rx="17.0" ry="10.7" fill="#EBB070" transform="rotate(25 135.8 708.8)"/><ellipse cx="573.1" cy="709.0" rx="16.6" ry="7.0" fill="#483A31" transform="rotate(-0 573.1 709.0)"/><ellipse cx="739.4" cy="709.0" rx="18.4" ry="9.1" fill="#372B25" transform="rotate(-24 739.4 709.0)"/><ellipse cx="897.8" cy="709.1" rx="13.3" ry="5.7" fill="#40332C" transform="rotate(-19 897.8 709.1)"/><ellipse cx="953.0" cy="709.1" rx="14.9" ry="8.1" fill="#5A4A42" transform="rotate(-21 953.0 709.1)"/><ellipse cx="686.1" cy="709.1" rx="12.2" ry="11.0" fill="#2E2420" transform="rotate(14 686.1 709.1)"/><ellipse cx="230.7" cy="709.5" rx="16.3" ry="8.7" fill="#2A211D" transform="rotate(8 230.7 709.5)"/><ellipse cx="502.3" cy="709.5" rx="13.2" ry="8.9" fill="#DDA468" transform="rotate(-20 502.3 709.5)"/><ellipse cx="740.9" cy="709.5" rx="15.7" ry="6.6" fill="#2A211D" transform="rotate(12 740.9 709.5)"/><ellipse cx="444.9" cy="709.7" rx="17.5" ry="8.8" fill="#886E5C" transform="rotate(12 444.9 709.7)"/><ellipse cx="913.6" cy="709.8" rx="14.6" ry="7.5" fill="#40332C" transform="rotate(2 913.6 709.8)"/><ellipse cx="963.2" cy="709.8" rx="11.7" ry="6.5" fill="#483A31" transform="rotate(-8 963.2 709.8)"/><ellipse cx="108.5" cy="710.0" rx="12.9" ry="10.6" fill="#2E2420" transform="rotate(-24 108.5 710.0)"/><ellipse cx="135.1" cy="710.0" rx="16.2" ry="9.7" fill="#2E2420" transform="rotate(-23 135.1 710.0)"/><ellipse cx="959.4" cy="710.0" rx="14.8" ry="6.8" fill="#40332C" transform="rotate(-25 959.4 710.0)"/><ellipse cx="595.3" cy="710.1" rx="17.6" ry="7.3" fill="#2A211D" transform="rotate(11 595.3 710.1)"/><ellipse cx="555.4" cy="710.1" rx="13.7" ry="8.4" fill="#483A31" transform="rotate(4 555.4 710.1)"/><ellipse cx="902.9" cy="710.2" rx="17.5" ry="6.7" fill="#C0A68A" transform="rotate(-22 902.9 710.2)"/><ellipse cx="934.7" cy="710.4" rx="16.2" ry="6.6" fill="#483A31" transform="rotate(-19 934.7 710.4)"/><ellipse cx="952.3" cy="710.5" rx="16.9" ry="6.7" fill="#2A211D" transform="rotate(1 952.3 710.5)"/><ellipse cx="536.4" cy="710.8" rx="17.5" ry="8.9" fill="#685446" transform="rotate(20 536.4 710.8)"/><ellipse cx="535.8" cy="710.8" rx="17.9" ry="6.6" fill="#40332C" transform="rotate(-6 535.8 710.8)"/><ellipse cx="471.6" cy="710.9" rx="13.6" ry="9.5" fill="#C98040" transform="rotate(-1 471.6 710.9)"/><ellipse cx="338.9" cy="711.0" rx="15.6" ry="8.5" fill="#EBB070" transform="rotate(6 338.9 711.0)"/><ellipse cx="386.1" cy="711.1" rx="14.3" ry="7.9" fill="#372B25" transform="rotate(8 386.1 711.1)"/><ellipse cx="497.8" cy="711.1" rx="17.9" ry="8.1" fill="#261E1B" transform="rotate(10 497.8 711.1)"/><ellipse cx="853.7" cy="711.3" rx="14.3" ry="8.3" fill="#C9B6A2" transform="rotate(-11 853.7 711.3)"/><ellipse cx="284.1" cy="711.3" rx="18.2" ry="7.3" fill="#AEA092" transform="rotate(-7 284.1 711.3)"/><ellipse cx="751.4" cy="711.4" rx="14.6" ry="10.5" fill="#2A211D" transform="rotate(11 751.4 711.4)"/><ellipse cx="777.1" cy="711.4" rx="20.5" ry="7.0" fill="#2E2420" transform="rotate(10 777.1 711.4)"/><ellipse cx="850.6" cy="711.5" rx="13.7" ry="8.8" fill="#2A211D" transform="rotate(-2 850.6 711.5)"/><ellipse cx="320.6" cy="711.6" rx="13.2" ry="6.6" fill="#7C6454" transform="rotate(-11 320.6 711.6)"/><ellipse cx="686.1" cy="711.6" rx="14.0" ry="9.0" fill="#7C6454" transform="rotate(-13 686.1 711.6)"/><ellipse cx="550.6" cy="711.6" rx="14.7" ry="9.1" fill="#483A31" transform="rotate(10 550.6 711.6)"/><ellipse cx="259.4" cy="711.7" rx="19.5" ry="7.8" fill="#40332C" transform="rotate(-2 259.4 711.7)"/><ellipse cx="950.7" cy="711.8" rx="17.9" ry="7.0" fill="#72594A" transform="rotate(-13 950.7 711.8)"/><ellipse cx="488.4" cy="711.8" rx="14.4" ry="6.8" fill="#261E1B" transform="rotate(7 488.4 711.8)"/><ellipse cx="591.6" cy="711.9" rx="13.5" ry="7.1" fill="#2A211D" transform="rotate(-22 591.6 711.9)"/><ellipse cx="275.9" cy="712.0" rx="11.1" ry="8.6" fill="#A68E78" transform="rotate(4 275.9 712.0)"/><ellipse cx="101.1" cy="712.1" rx="12.5" ry="8.8" fill="#685446" transform="rotate(10 101.1 712.1)"/><ellipse cx="894.3" cy="712.2" rx="14.3" ry="8.9" fill="#372B25" transform="rotate(-0 894.3 712.2)"/><ellipse cx="697.6" cy="712.2" rx="15.2" ry="7.0" fill="#B49A80" transform="rotate(-13 697.6 712.2)"/><ellipse cx="605.3" cy="712.5" rx="20.0" ry="6.9" fill="#261E1B" transform="rotate(-1 605.3 712.5)"/><ellipse cx="470.9" cy="712.6" rx="18.3" ry="9.4" fill="#2E2420" transform="rotate(-2 470.9 712.6)"/><ellipse cx="508.4" cy="712.6" rx="12.1" ry="10.9" fill="#5A4A42" transform="rotate(-9 508.4 712.6)"/><ellipse cx="329.0" cy="712.6" rx="14.5" ry="9.5" fill="#BCA288" transform="rotate(14 329.0 712.6)"/><ellipse cx="927.9" cy="712.7" rx="20.6" ry="9.9" fill="#BCA288" transform="rotate(-14 927.9 712.7)"/><ellipse cx="762.6" cy="712.8" rx="11.5" ry="7.0" fill="#72594A" transform="rotate(11 762.6 712.8)"/><ellipse cx="924.6" cy="712.9" rx="12.4" ry="8.3" fill="#483A31" transform="rotate(18 924.6 712.9)"/><ellipse cx="121.0" cy="713.0" rx="17.4" ry="8.8" fill="#65524A" transform="rotate(11 121.0 713.0)"/><ellipse cx="239.9" cy="713.0" rx="10.9" ry="6.1" fill="#65524A" transform="rotate(-4 239.9 713.0)"/></g>
<g filter="url(#blur1)"><ellipse cx="546.2" cy="677.3" rx="3.1" ry="2.1" fill="#D98F4C" opacity="0.8"/><ellipse cx="946.2" cy="701.7" rx="4.8" ry="3.6" fill="#D98F4C" opacity="0.8"/><ellipse cx="312.7" cy="656.5" rx="2.3" ry="1.7" fill="#EBB070" opacity="0.8"/><ellipse cx="913.2" cy="692.5" rx="3.0" ry="1.9" fill="#DDA468" opacity="0.8"/><ellipse cx="170.1" cy="702.7" rx="5.3" ry="3.7" fill="#E2A062" opacity="0.8"/><ellipse cx="930.3" cy="704.2" rx="4.3" ry="2.6" fill="#EBB070" opacity="0.8"/><ellipse cx="81.4" cy="695.7" rx="5.2" ry="3.6" fill="#E2A062" opacity="0.8"/><ellipse cx="670.5" cy="683.7" rx="3.4" ry="2.4" fill="#D98F4C" opacity="0.8"/><ellipse cx="199.7" cy="652.3" rx="2.7" ry="1.9" fill="#EBB070" opacity="0.8"/><ellipse cx="810.6" cy="673.4" rx="3.3" ry="2.0" fill="#DDA468" opacity="0.8"/><ellipse cx="603.4" cy="703.2" rx="4.5" ry="2.5" fill="#D98F4C" opacity="0.8"/><ellipse cx="895.3" cy="693.9" rx="3.6" ry="2.5" fill="#E2A062" opacity="0.8"/><ellipse cx="229.4" cy="663.4" rx="3.8" ry="2.3" fill="#EBB070" opacity="0.8"/><ellipse cx="560.2" cy="682.9" rx="2.8" ry="1.8" fill="#DDA468" opacity="0.8"/><ellipse cx="405.1" cy="705.2" rx="5.7" ry="3.8" fill="#E2A062" opacity="0.8"/><ellipse cx="604.9" cy="676.2" rx="3.0" ry="1.8" fill="#D98F4C" opacity="0.8"/><ellipse cx="405.7" cy="689.2" rx="4.4" ry="2.8" fill="#D98F4C" opacity="0.8"/><ellipse cx="202.3" cy="671.3" rx="4.0" ry="2.8" fill="#E2A062" opacity="0.8"/><ellipse cx="155.4" cy="683.7" rx="4.2" ry="2.8" fill="#EBB070" opacity="0.8"/><ellipse cx="524.2" cy="701.0" rx="5.4" ry="3.0" fill="#EBB070" opacity="0.8"/><ellipse cx="301.1" cy="654.1" rx="2.5" ry="1.7" fill="#EBB070" opacity="0.8"/><ellipse cx="398.4" cy="689.8" rx="3.7" ry="2.1" fill="#D98F4C" opacity="0.8"/><ellipse cx="144.9" cy="656.2" rx="2.8" ry="2.0" fill="#E2A062" opacity="0.8"/><ellipse cx="393.0" cy="656.6" rx="2.3" ry="1.7" fill="#DDA468" opacity="0.8"/><ellipse cx="768.2" cy="689.6" rx="4.0" ry="2.3" fill="#C98040" opacity="0.8"/><ellipse cx="296.8" cy="681.6" rx="4.1" ry="2.5" fill="#E2A062" opacity="0.8"/><ellipse cx="547.6" cy="698.3" rx="4.5" ry="3.3" fill="#DDA468" opacity="0.8"/><ellipse cx="627.6" cy="689.2" rx="3.4" ry="2.6" fill="#EBB070" opacity="0.8"/><ellipse cx="436.7" cy="701.3" rx="4.3" ry="2.7" fill="#C98040" opacity="0.8"/><ellipse cx="613.8" cy="691.0" rx="3.5" ry="2.7" fill="#DDA468" opacity="0.8"/><ellipse cx="541.9" cy="704.8" rx="4.5" ry="3.1" fill="#EBB070" opacity="0.8"/><ellipse cx="643.6" cy="700.6" rx="4.6" ry="3.1" fill="#C98040" opacity="0.8"/><ellipse cx="688.2" cy="697.9" rx="4.5" ry="3.0" fill="#C98040" opacity="0.8"/><ellipse cx="559.0" cy="704.4" rx="5.2" ry="3.5" fill="#E2A062" opacity="0.8"/><ellipse cx="546.4" cy="690.1" rx="3.7" ry="2.1" fill="#EBB070" opacity="0.8"/><ellipse cx="914.7" cy="699.2" rx="4.0" ry="2.4" fill="#DDA468" opacity="0.8"/><ellipse cx="199.9" cy="666.4" rx="4.1" ry="2.3" fill="#D98F4C" opacity="0.8"/><ellipse cx="483.7" cy="685.4" rx="3.8" ry="2.7" fill="#C98040" opacity="0.8"/><ellipse cx="646.6" cy="695.5" rx="3.9" ry="2.1" fill="#C98040" opacity="0.8"/><ellipse cx="206.6" cy="699.9" rx="5.6" ry="3.1" fill="#EBB070" opacity="0.8"/><ellipse cx="894.0" cy="681.5" rx="3.6" ry="3.6" fill="#F0A040"/><ellipse cx="872.0" cy="668.0" rx="3.2" ry="5.0" fill="#E89850"/><ellipse cx="858.0" cy="680.0" rx="3.0" ry="3.0" fill="#E09040" opacity="0.9"/><ellipse cx="846.0" cy="663.0" rx="3.0" ry="2.0" fill="#D9A070" opacity="0.9"/></g>
</g>
</g></svg>
</div>

<div id="win"></div>
</body>
</html>
